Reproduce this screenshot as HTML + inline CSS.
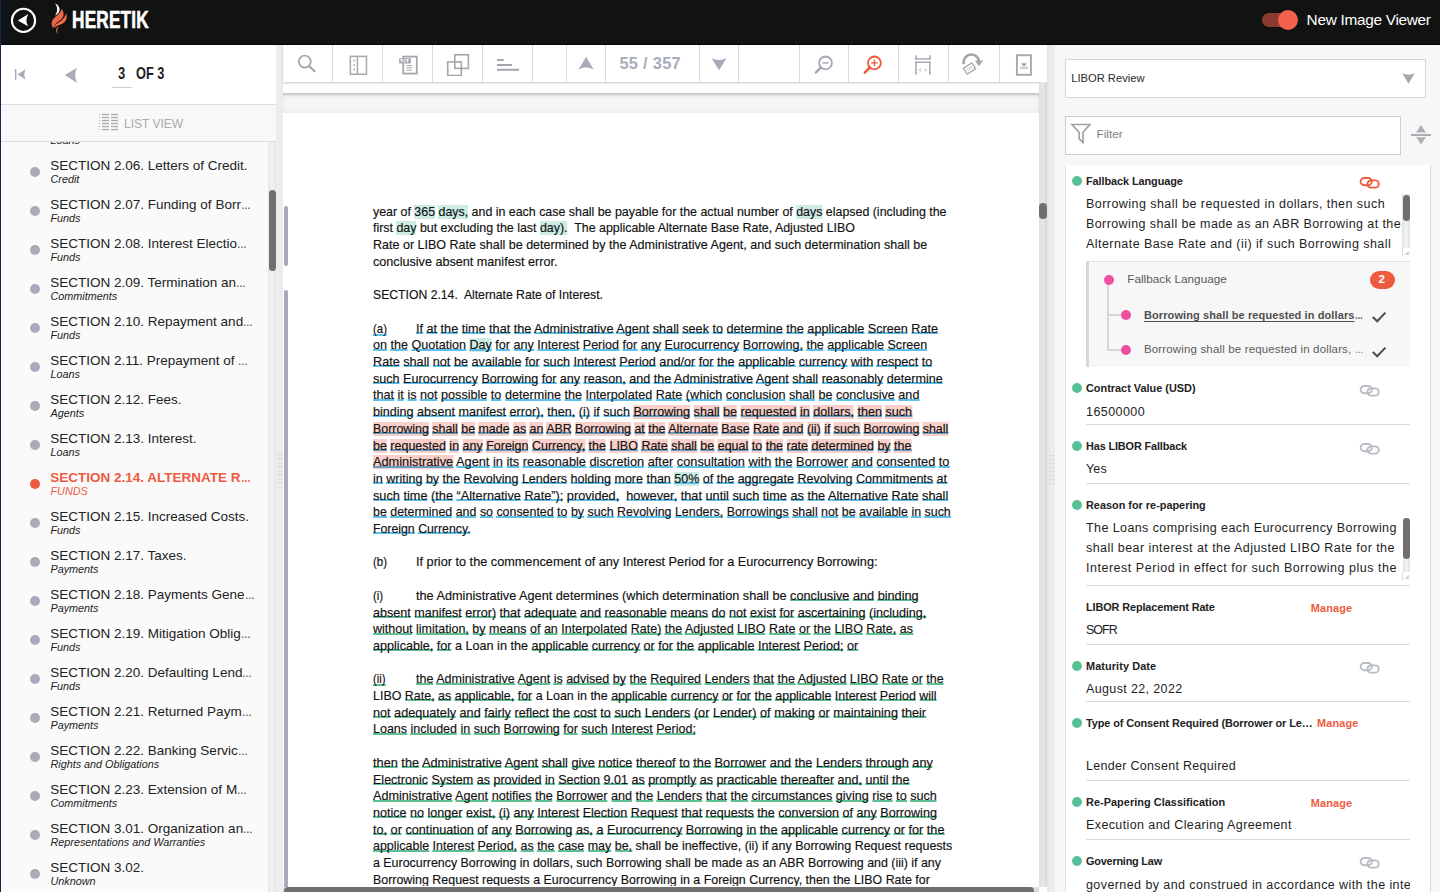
<!DOCTYPE html><html><head><meta charset="utf-8"><style>
*{margin:0;padding:0;box-sizing:border-box}
html,body{width:1440px;height:892px;overflow:hidden;background:#f0f0f0;font-family:"Liberation Sans",sans-serif;}
body{position:relative}
.a{position:absolute}
.t{position:absolute;white-space:nowrap}
.dl{font-size:12.4px;line-height:12.4px;color:#111;transform-origin:0 0;-webkit-text-stroke:0.15px #111;white-space:pre}
</style></head><body><div class="a" style="left:0;top:0;width:1440px;height:45px;background:#111212"></div>
<div class="a" style="left:0;top:44px;width:1440px;height:1px;background:#050505"></div>
<svg class="a" style="left:9px;top:6px" width="30" height="30" viewBox="0 0 30 30"><circle cx="14.5" cy="14.4" r="11.6" fill="none" stroke="#fff" stroke-width="2.1"/><path d="M8.8 14.5 L19.4 8.1 Q15.6 14.5 19 20.3 Z" fill="#fff"/></svg>
<svg class="a" style="left:40px;top:0px" width="40" height="40" viewBox="40 0 40 40"><path d="M55,3.6 C58.6,5 60.2,8 59.3,11.2 C58.6,13.2 57,14.6 55,15.6 C56.8,13.2 57.5,10.2 57,7.8 C56.7,6.2 56.1,4.8 55,3.6 Z" fill="#fff"/><path d="M61.5,8.8 C64.2,12 64.4,16.6 61.2,19.6 C59,21.6 56,22.6 54.6,25.4 L53.4,27.9 C51.2,26 51,22 53.2,19.2 C55.8,15.8 60.8,13.8 61.5,8.8 Z" fill="#ee6447"/><path d="M66.2,13.5 C67.6,17.6 66.2,21.6 62.6,23.6 C60,25.1 56.8,25.6 53.8,28 C54.8,25 57.4,23 60,21.6 C62.6,20.1 64.6,17.6 66.2,13.5 Z" fill="#f06f45"/><path d="M58.8,26 C56.4,27.6 55,30.6 57.6,34.2 C56.9,31.6 57.2,28.6 58.8,26 Z" fill="#f07445"/></svg>
<div class="t" style="left:72.4px;top:8.0px;font-size:24.4px;line-height:24.4px;font-weight:bold;color:#fff;-webkit-text-stroke:0.6px #fff;transform:scaleX(0.705);transform-origin:0 0;letter-spacing:0.3px">HERETIK</div>
<div class="a" style="left:1262px;top:13px;width:30px;height:14px;border-radius:7px;background:#8a3a30"></div>
<div class="a" style="left:1278px;top:10px;width:20px;height:20px;border-radius:50%;background:#f26149"></div>
<div class="t " style="left:1306.60px;top:12.16px;font-size:15.4px;line-height:15.4px;color:#fff;letter-spacing:-0.3px">New Image Viewer</div>
<div class="a" style="left:0;top:0;width:1px;height:892px;background:#13294b"></div>
<div class="a" style="left:1px;top:45px;width:275px;height:847px;background:#fafafa"></div>
<div class="a" style="left:1px;top:45px;width:275px;height:60px;background:#fff;border-bottom:1px solid #dcdcdc"></div>
<div class="a" style="left:1px;top:105px;width:275px;height:37px;background:#f8f8f8;border-bottom:1px solid #dcdcdc"></div>
<svg class="a" style="left:12px;top:66px" width="18" height="18" viewBox="0 0 18 18"><rect x="2.9" y="3" width="1.5" height="10.8" fill="#a9abbb"/><path d="M5.6 8.4 L13.8 3 Q10.9 8.4 13.8 13.8 Z" fill="#a9abbb"/></svg>
<svg class="a" style="left:62px;top:66px" width="18" height="18" viewBox="0 0 18 18"><path d="M2.8 8.9 L15.1 1.8 Q11.2 8.9 15.1 17 Z" fill="#a9abbb"/></svg>
<div class="t" style="left:118.3px;top:64.6px;font-size:16.2px;line-height:16.2px;font-weight:bold;color:#1f1f1f;transform:scaleX(0.8);transform-origin:0 0">3</div>
<div class="a" style="left:112px;top:87px;width:20px;height:1px;background:#cfcfcf"></div>
<div class="t" style="left:136.0px;top:64.6px;font-size:16.2px;line-height:16.2px;font-weight:bold;color:#1f1f1f;transform:scaleX(0.79);transform-origin:0 0">OF 3</div>
<svg class="a" style="left:99px;top:112.8px" width="20" height="18" viewBox="0 0 20 18"><g fill="#a9acb2"><rect x="0" y="1" width="1" height="1"/><rect x="3" y="0.9" width="7" height="1.3"/><rect x="12" y="0.9" width="7" height="1.3"/><rect x="0" y="4" width="1" height="1"/><rect x="3" y="3.9" width="7" height="1.3"/><rect x="12" y="3.9" width="7" height="1.3"/><rect x="0" y="7" width="1" height="1"/><rect x="3" y="6.9" width="7" height="1.3"/><rect x="12" y="6.9" width="7" height="1.3"/><rect x="0" y="10" width="1" height="1"/><rect x="3" y="9.9" width="7" height="1.3"/><rect x="12" y="9.9" width="7" height="1.3"/><rect x="0" y="13" width="1" height="1"/><rect x="3" y="12.9" width="7" height="1.3"/><rect x="12" y="12.9" width="7" height="1.3"/><rect x="0" y="16" width="1" height="1"/><rect x="3" y="15.9" width="7" height="1.3"/><rect x="12" y="15.9" width="7" height="1.3"/></g></svg>
<div class="t " style="left:124.00px;top:117.74px;font-size:12px;line-height:12px;color:#a8abb2">LIST VIEW</div>
<div class="a" style="left:1px;top:142px;width:267px;height:750px;overflow:hidden">
<div class="a" style="left:29px;top:-14.1px;width:10px;height:10px;border-radius:50%;background:#a9abba"></div>
<div class="t " style="left:49.30px;top:-22.43px;font-size:13.5px;line-height:13.5px;color:#222;">SECTION 2.05. <span style="display:inline-block;transform:scaleX(0.72);transform-origin:0 0">…</span></div>
<div class="t " style="left:49.50px;top:-7.24px;font-size:10.8px;line-height:10.8px;color:#222;font-style:italic">Loans</div>
<div class="a" style="left:29px;top:24.9px;width:10px;height:10px;border-radius:50%;background:#a9abba"></div>
<div class="t " style="left:49.30px;top:16.57px;font-size:13.5px;line-height:13.5px;color:#222;">SECTION 2.06. Letters of Credit.</div>
<div class="t " style="left:49.50px;top:31.76px;font-size:10.8px;line-height:10.8px;color:#222;font-style:italic">Credit</div>
<div class="a" style="left:29px;top:63.9px;width:10px;height:10px;border-radius:50%;background:#a9abba"></div>
<div class="t " style="left:49.30px;top:55.57px;font-size:13.5px;line-height:13.5px;color:#222;">SECTION 2.07. Funding of Borr<span style="display:inline-block;transform:scaleX(0.72);transform-origin:0 0">…</span></div>
<div class="t " style="left:49.50px;top:70.76px;font-size:10.8px;line-height:10.8px;color:#222;font-style:italic">Funds</div>
<div class="a" style="left:29px;top:102.9px;width:10px;height:10px;border-radius:50%;background:#a9abba"></div>
<div class="t " style="left:49.30px;top:94.57px;font-size:13.5px;line-height:13.5px;color:#222;">SECTION 2.08. Interest Electio<span style="display:inline-block;transform:scaleX(0.72);transform-origin:0 0">…</span></div>
<div class="t " style="left:49.50px;top:109.76px;font-size:10.8px;line-height:10.8px;color:#222;font-style:italic">Funds</div>
<div class="a" style="left:29px;top:141.9px;width:10px;height:10px;border-radius:50%;background:#a9abba"></div>
<div class="t " style="left:49.30px;top:133.57px;font-size:13.5px;line-height:13.5px;color:#222;">SECTION 2.09. Termination an<span style="display:inline-block;transform:scaleX(0.72);transform-origin:0 0">…</span></div>
<div class="t " style="left:49.50px;top:148.76px;font-size:10.8px;line-height:10.8px;color:#222;font-style:italic">Commitments</div>
<div class="a" style="left:29px;top:180.9px;width:10px;height:10px;border-radius:50%;background:#a9abba"></div>
<div class="t " style="left:49.30px;top:172.57px;font-size:13.5px;line-height:13.5px;color:#222;">SECTION 2.10. Repayment and<span style="display:inline-block;transform:scaleX(0.72);transform-origin:0 0">…</span></div>
<div class="t " style="left:49.50px;top:187.76px;font-size:10.8px;line-height:10.8px;color:#222;font-style:italic">Funds</div>
<div class="a" style="left:29px;top:219.9px;width:10px;height:10px;border-radius:50%;background:#a9abba"></div>
<div class="t " style="left:49.30px;top:211.57px;font-size:13.5px;line-height:13.5px;color:#222;">SECTION 2.11. Prepayment of <span style="display:inline-block;transform:scaleX(0.72);transform-origin:0 0">…</span></div>
<div class="t " style="left:49.50px;top:226.76px;font-size:10.8px;line-height:10.8px;color:#222;font-style:italic">Loans</div>
<div class="a" style="left:29px;top:258.9px;width:10px;height:10px;border-radius:50%;background:#a9abba"></div>
<div class="t " style="left:49.30px;top:250.57px;font-size:13.5px;line-height:13.5px;color:#222;">SECTION 2.12. Fees.</div>
<div class="t " style="left:49.50px;top:265.76px;font-size:10.8px;line-height:10.8px;color:#222;font-style:italic">Agents</div>
<div class="a" style="left:29px;top:297.9px;width:10px;height:10px;border-radius:50%;background:#a9abba"></div>
<div class="t " style="left:49.30px;top:289.57px;font-size:13.5px;line-height:13.5px;color:#222;">SECTION 2.13. Interest.</div>
<div class="t " style="left:49.50px;top:304.76px;font-size:10.8px;line-height:10.8px;color:#222;font-style:italic">Loans</div>
<div class="a" style="left:29px;top:336.9px;width:10px;height:10px;border-radius:50%;background:#ee5a3f"></div>
<div class="t " style="left:49.30px;top:328.57px;font-size:13.5px;line-height:13.5px;color:#ee5a3f;font-weight:bold;">SECTION 2.14. ALTERNATE R<span style="display:inline-block;transform:scaleX(0.72);transform-origin:0 0">…</span></div>
<div class="t " style="left:49.50px;top:343.76px;font-size:10.8px;line-height:10.8px;color:#ee5a3f;font-style:italic">FUNDS</div>
<div class="a" style="left:29px;top:375.9px;width:10px;height:10px;border-radius:50%;background:#a9abba"></div>
<div class="t " style="left:49.30px;top:367.57px;font-size:13.5px;line-height:13.5px;color:#222;">SECTION 2.15. Increased Costs.</div>
<div class="t " style="left:49.50px;top:382.76px;font-size:10.8px;line-height:10.8px;color:#222;font-style:italic">Funds</div>
<div class="a" style="left:29px;top:414.9px;width:10px;height:10px;border-radius:50%;background:#a9abba"></div>
<div class="t " style="left:49.30px;top:406.57px;font-size:13.5px;line-height:13.5px;color:#222;">SECTION 2.17. Taxes.</div>
<div class="t " style="left:49.50px;top:421.76px;font-size:10.8px;line-height:10.8px;color:#222;font-style:italic">Payments</div>
<div class="a" style="left:29px;top:453.9px;width:10px;height:10px;border-radius:50%;background:#a9abba"></div>
<div class="t " style="left:49.30px;top:445.57px;font-size:13.5px;line-height:13.5px;color:#222;">SECTION 2.18. Payments Gene<span style="display:inline-block;transform:scaleX(0.72);transform-origin:0 0">…</span></div>
<div class="t " style="left:49.50px;top:460.76px;font-size:10.8px;line-height:10.8px;color:#222;font-style:italic">Payments</div>
<div class="a" style="left:29px;top:492.9px;width:10px;height:10px;border-radius:50%;background:#a9abba"></div>
<div class="t " style="left:49.30px;top:484.57px;font-size:13.5px;line-height:13.5px;color:#222;">SECTION 2.19. Mitigation Oblig<span style="display:inline-block;transform:scaleX(0.72);transform-origin:0 0">…</span></div>
<div class="t " style="left:49.50px;top:499.76px;font-size:10.8px;line-height:10.8px;color:#222;font-style:italic">Funds</div>
<div class="a" style="left:29px;top:531.9px;width:10px;height:10px;border-radius:50%;background:#a9abba"></div>
<div class="t " style="left:49.30px;top:523.57px;font-size:13.5px;line-height:13.5px;color:#222;">SECTION 2.20. Defaulting Lend<span style="display:inline-block;transform:scaleX(0.72);transform-origin:0 0">…</span></div>
<div class="t " style="left:49.50px;top:538.76px;font-size:10.8px;line-height:10.8px;color:#222;font-style:italic">Funds</div>
<div class="a" style="left:29px;top:570.9px;width:10px;height:10px;border-radius:50%;background:#a9abba"></div>
<div class="t " style="left:49.30px;top:562.57px;font-size:13.5px;line-height:13.5px;color:#222;">SECTION 2.21. Returned Paym<span style="display:inline-block;transform:scaleX(0.72);transform-origin:0 0">…</span></div>
<div class="t " style="left:49.50px;top:577.76px;font-size:10.8px;line-height:10.8px;color:#222;font-style:italic">Payments</div>
<div class="a" style="left:29px;top:609.9px;width:10px;height:10px;border-radius:50%;background:#a9abba"></div>
<div class="t " style="left:49.30px;top:601.57px;font-size:13.5px;line-height:13.5px;color:#222;">SECTION 2.22. Banking Servic<span style="display:inline-block;transform:scaleX(0.72);transform-origin:0 0">…</span></div>
<div class="t " style="left:49.50px;top:616.76px;font-size:10.8px;line-height:10.8px;color:#222;font-style:italic">Rights and Obligations</div>
<div class="a" style="left:29px;top:648.9px;width:10px;height:10px;border-radius:50%;background:#a9abba"></div>
<div class="t " style="left:49.30px;top:640.57px;font-size:13.5px;line-height:13.5px;color:#222;">SECTION 2.23. Extension of M<span style="display:inline-block;transform:scaleX(0.72);transform-origin:0 0">…</span></div>
<div class="t " style="left:49.50px;top:655.76px;font-size:10.8px;line-height:10.8px;color:#222;font-style:italic">Commitments</div>
<div class="a" style="left:29px;top:687.9px;width:10px;height:10px;border-radius:50%;background:#a9abba"></div>
<div class="t " style="left:49.30px;top:679.57px;font-size:13.5px;line-height:13.5px;color:#222;">SECTION 3.01. Organization an<span style="display:inline-block;transform:scaleX(0.72);transform-origin:0 0">…</span></div>
<div class="t " style="left:49.50px;top:694.76px;font-size:10.8px;line-height:10.8px;color:#222;font-style:italic">Representations and Warranties</div>
<div class="a" style="left:29px;top:726.9px;width:10px;height:10px;border-radius:50%;background:#a9abba"></div>
<div class="t " style="left:49.30px;top:718.57px;font-size:13.5px;line-height:13.5px;color:#222;">SECTION 3.02.</div>
<div class="t " style="left:49.50px;top:733.76px;font-size:10.8px;line-height:10.8px;color:#222;font-style:italic">Unknown</div>
</div>
<div class="a" style="left:268px;top:142px;width:8px;height:750px;background:linear-gradient(90deg,#e6e6e6,#f2f2f2 50%,#e6e6e6)"></div>
<div class="a" style="left:268.5px;top:189.5px;width:7.5px;height:81px;border-radius:4px;background:#6f6f6f"></div>
<div class="a" style="left:276px;top:45px;width:7px;height:847px;background:#ececec"></div>
<svg class="a" style="left:278px;top:454px" width="5" height="32"><g fill="#c8c8c8"><rect x="0" y="0" width="1.3" height="1.3"/><rect x="3" y="0" width="1.3" height="1.3"/><rect x="0" y="4" width="1.3" height="1.3"/><rect x="3" y="4" width="1.3" height="1.3"/><rect x="0" y="8" width="1.3" height="1.3"/><rect x="3" y="8" width="1.3" height="1.3"/><rect x="0" y="12" width="1.3" height="1.3"/><rect x="3" y="12" width="1.3" height="1.3"/><rect x="0" y="16" width="1.3" height="1.3"/><rect x="3" y="16" width="1.3" height="1.3"/><rect x="0" y="20" width="1.3" height="1.3"/><rect x="3" y="20" width="1.3" height="1.3"/><rect x="0" y="24" width="1.3" height="1.3"/><rect x="3" y="24" width="1.3" height="1.3"/><rect x="0" y="28" width="1.3" height="1.3"/><rect x="3" y="28" width="1.3" height="1.3"/></g></svg>
<div class="a" style="left:283px;top:45px;width:765px;height:847px;background:#f3f3f3"></div>
<div class="a" style="left:283px;top:82px;width:755.5px;height:11px;background:#fff"></div>
<div class="a" style="left:283px;top:93px;width:755.5px;height:20px;background:linear-gradient(#f4f4f4,#f6f6f6 70%,#efefef);box-shadow:inset 0 3px 3px -1px rgba(0,0,0,0.22)"></div>
<div class="a" style="left:283px;top:113px;width:755.5px;height:779px;background:#fff"></div>
<div class="a" style="left:284px;top:205.5px;width:3.8px;height:60.5px;border-radius:2px;background:#a8a9b9"></div>
<div class="a" style="left:284px;top:290px;width:3.8px;height:602px;border-radius:2px;background:#a8a9b9"></div>
<div class="a" style="left:283px;top:45px;width:765px;height:37px;background:#fff;box-shadow:0 1px 2px rgba(0,0,0,0.22)"></div>
<div class="a" style="left:331.9px;top:45px;width:1px;height:37px;background:#dadada"></div>
<div class="a" style="left:381.9px;top:45px;width:1px;height:37px;background:#dadada"></div>
<div class="a" style="left:431.9px;top:45px;width:1px;height:37px;background:#dadada"></div>
<div class="a" style="left:481.9px;top:45px;width:1px;height:37px;background:#dadada"></div>
<div class="a" style="left:531.9px;top:45px;width:1px;height:37px;background:#dadada"></div>
<div class="a" style="left:566.3px;top:45px;width:1px;height:37px;background:#dadada"></div>
<div class="a" style="left:605.2px;top:45px;width:1px;height:37px;background:#dadada"></div>
<div class="a" style="left:698.9px;top:45px;width:1px;height:37px;background:#dadada"></div>
<div class="a" style="left:737.9px;top:45px;width:1px;height:37px;background:#dadada"></div>
<div class="a" style="left:799.1px;top:45px;width:1px;height:37px;background:#dadada"></div>
<div class="a" style="left:848.1px;top:45px;width:1px;height:37px;background:#dadada"></div>
<div class="a" style="left:898.1px;top:45px;width:1px;height:37px;background:#dadada"></div>
<div class="a" style="left:948.0px;top:45px;width:1px;height:37px;background:#dadada"></div>
<div class="a" style="left:998.5px;top:45px;width:1px;height:37px;background:#dadada"></div>
<svg class="a" style="left:294px;top:50px" width="26" height="26" viewBox="0 0 26 26"><circle cx="10.8" cy="11.6" r="6" fill="none" stroke="#a4a8ae" stroke-width="1.8"/><path d="M15.3 16.2 L20.5 21.3" stroke="#a4a8ae" stroke-width="2.2" stroke-linecap="round"/></svg>
<svg class="a" style="left:344px;top:50px" width="26" height="26" viewBox="0 0 26 26"><rect x="6.35" y="6.35" width="16.1" height="17.9" fill="none" stroke="#a4a8ae" stroke-width="1.5"/><path d="M13.4 6 V24.5" stroke="#a4a8ae" stroke-width="1.5"/><g fill="#a4a8ae"><rect x="9.3" y="9.8" width="1.6" height="1.6"/><rect x="9.3" y="14.3" width="1.6" height="1.6"/><rect x="9.3" y="18.7" width="1.6" height="1.6"/></g></svg>
<svg class="a" style="left:394px;top:50px" width="26" height="26" viewBox="0 0 26 26"><rect x="9.2" y="6.6" width="13.6" height="17.0" fill="none" stroke="#a4a8ae" stroke-width="1.8"/><rect x="5.1" y="8.3" width="11.8" height="5.2" fill="#a4a8ae" rx="0.5"/><g fill="#fff"><rect x="6.3" y="9.4" width="2.6" height="0.9"/><rect x="7.2" y="9.4" width="0.9" height="3"/><rect x="12.2" y="9.4" width="2.6" height="0.9"/><rect x="13.1" y="9.4" width="0.9" height="3"/><path d="M9.4 9.4 L11.5 12.5 M11.5 9.4 L9.4 12.5" stroke="#fff" stroke-width="0.8"/></g><g fill="#a4a8ae"><rect x="12.5" y="15" width="5.5" height="1"/><rect x="12.5" y="17.3" width="5.5" height="1"/><rect x="12.5" y="19.6" width="5.5" height="1"/></g></svg>
<svg class="a" style="left:444px;top:50px" width="26" height="26" viewBox="0 0 26 26"><rect x="10.8" y="4.8" width="13.6" height="13.6" fill="none" stroke="#a4a8ae" stroke-width="1.6"/><rect x="3.7" y="11.9" width="13.6" height="13.6" fill="none" stroke="#a4a8ae" stroke-width="1.6"/></svg>
<svg class="a" style="left:494px;top:50px" width="26" height="26" viewBox="0 0 26 26"><g fill="#a4a8ae"><rect x="3" y="9" width="6.8" height="2"/><rect x="3" y="14" width="15" height="2"/><rect x="3" y="18.75" width="22" height="2"/></g></svg>
<svg class="a" style="left:576px;top:50px" width="20" height="22" viewBox="0 0 20 22"><path d="M10.2 6.8 L17.8 19.8 Q10.2 14.6 2.4 19.8 Z" fill="#a9abbb"/></svg>
<div class="t " style="left:619.40px;top:55.22px;font-size:16.4px;line-height:16.4px;color:#a9abbb;font-weight:bold;letter-spacing:0.3px">55 / 357</div>
<svg class="a" style="left:709px;top:50px" width="20" height="22" viewBox="0 0 20 22"><path d="M2.6 8.3 Q10 11.5 17.5 8.3 L10 20.2 Z" fill="#a9abbb"/></svg>
<svg class="a" style="left:810px;top:50px" width="26" height="26" viewBox="0 0 26 26"><circle cx="15.5" cy="12.9" r="6.4" fill="none" stroke="#a4a8ae" stroke-width="1.8"/><path d="M11 17.4 L5.8 22.6" stroke="#a4a8ae" stroke-width="2.4" stroke-linecap="round"/><path d="M12.3 12.9 H18.7" stroke="#a4a8ae" stroke-width="1.4"/></svg>
<svg class="a" style="left:859px;top:50px" width="26" height="26" viewBox="0 0 26 26"><circle cx="15.4" cy="12.9" r="6.4" fill="none" stroke="#ef5638" stroke-width="1.8"/><path d="M10.9 17.4 L5.8 22.6" stroke="#ef5638" stroke-width="2.4" stroke-linecap="round"/><path d="M12.2 12.9 H18.6 M15.4 9.7 V16.1" stroke="#ef5638" stroke-width="1.4"/></svg>
<svg class="a" style="left:910px;top:50px" width="26" height="26" viewBox="0 0 26 26"><g fill="#a4a8ae"><rect x="5.2" y="5.2" width="1.5" height="4.3"/><rect x="19.1" y="5.2" width="1.5" height="4.3"/><rect x="5.2" y="8.2" width="15.4" height="1.4"/><rect x="5.2" y="11.6" width="15.4" height="1.4"/><rect x="5.2" y="11.6" width="1.5" height="13"/><rect x="19.1" y="11.6" width="1.5" height="13"/></g><path d="M10.8 18.8 L9.3 20 L10.8 21.2 M15 18.8 L16.5 20 L15 21.2" stroke="#a4a8ae" stroke-width="0.9" fill="none"/></svg>
<svg class="a" style="left:960px;top:50px" width="26" height="26" viewBox="0 0 26 26"><path d="M3.6 14.2 C3 8.5 7 4.5 11.5 4.5 C15.5 4.5 18.5 7.5 19 11" fill="none" stroke="#a4a8ae" stroke-width="2.6"/><path d="M15 10.5 L23.2 10.5 L18.8 16.2 Z" fill="#a4a8ae"/><g transform="rotate(-33 9.5 18.5)"><rect x="4.5" y="15" width="10" height="7" fill="#fff" stroke="#a4a8ae" stroke-width="1.3"/><path d="M7.5 17 V20 M9.5 17 V20 M11.5 17 V20" stroke="#a4a8ae" stroke-width="0.7"/></g></svg>
<svg class="a" style="left:1010px;top:50px" width="26" height="26" viewBox="0 0 26 26"><rect x="6.9" y="5.2" width="14" height="19.6" fill="none" stroke="#a4a8ae" stroke-width="1.9"/><path d="M11 13.3 L16.9 13.3 L13.95 17.2 Z" fill="#a4a8ae"/><path d="M11 16.6 V18.3 H16.9 V16.6" fill="none" stroke="#a4a8ae" stroke-width="1.1"/></svg>
<div class="a" style="left:1039px;top:82px;width:8.2px;height:804.7px;background:linear-gradient(90deg,#dedede,#e8e8e8 50%,#d6d6d6)"></div>
<div class="a" style="left:1039px;top:886.7px;width:8.2px;height:6px;background:#fff"></div>
<div class="a" style="left:1047.2px;top:45px;width:1.5px;height:847px;background:#e6e6e6"></div>
<div class="a" style="left:1039.4px;top:203px;width:7.4px;height:16px;border-radius:4px;background:#6f6f6f"></div>
<div class="a" style="left:283px;top:886.7px;width:756px;height:6px;background:linear-gradient(#e0e0e0,#d8d8d8)"></div>
<div class="a" style="left:284px;top:886.8px;width:749.8px;height:8px;border-radius:4px;background:#6f6f6f"></div>
<div class="a" style="left:1048.5px;top:45px;width:6.8px;height:847px;background:#ececec"></div>
<svg class="a" style="left:1050px;top:455px" width="5" height="32"><g fill="#c8c8c8"><rect x="0" y="0" width="1.3" height="1.3"/><rect x="3" y="0" width="1.3" height="1.3"/><rect x="0" y="4" width="1.3" height="1.3"/><rect x="3" y="4" width="1.3" height="1.3"/><rect x="0" y="8" width="1.3" height="1.3"/><rect x="3" y="8" width="1.3" height="1.3"/><rect x="0" y="12" width="1.3" height="1.3"/><rect x="3" y="12" width="1.3" height="1.3"/><rect x="0" y="16" width="1.3" height="1.3"/><rect x="3" y="16" width="1.3" height="1.3"/><rect x="0" y="20" width="1.3" height="1.3"/><rect x="3" y="20" width="1.3" height="1.3"/><rect x="0" y="24" width="1.3" height="1.3"/><rect x="3" y="24" width="1.3" height="1.3"/><rect x="0" y="28" width="1.3" height="1.3"/><rect x="3" y="28" width="1.3" height="1.3"/></g></svg>
<div class="a" style="left:288px;top:113px;width:750px;height:773px;overflow:hidden">
<div class="t dl" style="left:84.60px;top:92.70px;transform:scaleX(1.0006)">year of <span style="background:#cdebe5;">365</span> <span style="background:#cdebe5;">days,</span> and in each case shall be payable for the actual number of <span style="background:#cdebe5;">days</span> elapsed (including the</div>
<div class="t dl" style="left:84.60px;top:109.40px;transform:scaleX(1.0015)">first <span style="background:#cdebe5;">day</span> but excluding the last <span style="background:#cdebe5;">day).</span>  The applicable Alternate Base Rate, Adjusted LIBO</div>
<div class="t dl" style="left:84.60px;top:126.10px;transform:scaleX(1.0107)">Rate or LIBO Rate shall be determined by the Administrative Agent, and such determination shall be</div>
<div class="t dl" style="left:84.60px;top:142.80px;transform:scaleX(1.0185)">conclusive absent manifest error.</div>
<div class="t dl" style="left:84.60px;top:176.20px;transform:scaleX(0.9849)">SECTION 2.14.  Alternate Rate of Interest.</div>
<div class="t dl" style="left:128.00px;top:209.60px;transform:scaleX(1.0195)"><span style="background:linear-gradient(#5cc0ea,#5cc0ea) 0 calc(100% - 1.6px)/100% 2px no-repeat;">If</span> <span style="background:linear-gradient(#5cc0ea,#5cc0ea) 0 calc(100% - 1.6px)/100% 2px no-repeat;">at</span> <span style="background:linear-gradient(#5cc0ea,#5cc0ea) 0 calc(100% - 1.6px)/100% 2px no-repeat;">the</span> <span style="background:linear-gradient(#5cc0ea,#5cc0ea) 0 calc(100% - 1.6px)/100% 2px no-repeat;">time</span> <span style="background:linear-gradient(#5cc0ea,#5cc0ea) 0 calc(100% - 1.6px)/100% 2px no-repeat;">that</span> <span style="background:linear-gradient(#5cc0ea,#5cc0ea) 0 calc(100% - 1.6px)/100% 2px no-repeat;">the</span> <span style="background:linear-gradient(#5cc0ea,#5cc0ea) 0 calc(100% - 1.6px)/100% 2px no-repeat;">Administrative</span> <span style="background:linear-gradient(#5cc0ea,#5cc0ea) 0 calc(100% - 1.6px)/100% 2px no-repeat;">Agent</span> <span style="background:linear-gradient(#5cc0ea,#5cc0ea) 0 calc(100% - 1.6px)/100% 2px no-repeat;">shall</span> <span style="background:linear-gradient(#5cc0ea,#5cc0ea) 0 calc(100% - 1.6px)/100% 2px no-repeat;">seek</span> <span style="background:linear-gradient(#5cc0ea,#5cc0ea) 0 calc(100% - 1.6px)/100% 2px no-repeat;">to</span> <span style="background:linear-gradient(#5cc0ea,#5cc0ea) 0 calc(100% - 1.6px)/100% 2px no-repeat;">determine</span> <span style="background:linear-gradient(#5cc0ea,#5cc0ea) 0 calc(100% - 1.6px)/100% 2px no-repeat;">the</span> <span style="background:linear-gradient(#5cc0ea,#5cc0ea) 0 calc(100% - 1.6px)/100% 2px no-repeat;">applicable</span> <span style="background:linear-gradient(#5cc0ea,#5cc0ea) 0 calc(100% - 1.6px)/100% 2px no-repeat;">Screen</span> <span style="background:linear-gradient(#5cc0ea,#5cc0ea) 0 calc(100% - 1.6px)/100% 2px no-repeat;">Rate</span></div>
<div class="t dl" style="left:84.60px;top:209.60px;transform:scaleX(0.92)"><span style="background:linear-gradient(#5cc0ea,#5cc0ea) 0 100%/100% 2px no-repeat;">(a)</span></div>
<div class="t dl" style="left:84.60px;top:226.30px;transform:scaleX(1.0144)"><span style="background:linear-gradient(#5cc0ea,#5cc0ea) 0 calc(100% - 1.6px)/100% 2px no-repeat;">on</span> <span style="background:linear-gradient(#5cc0ea,#5cc0ea) 0 calc(100% - 1.6px)/100% 2px no-repeat;">the</span> <span style="background:linear-gradient(#5cc0ea,#5cc0ea) 0 calc(100% - 1.6px)/100% 2px no-repeat;">Quotation</span> <span style="background:linear-gradient(#5cc0ea,#5cc0ea) 0 calc(100% - 1.6px)/100% 2px no-repeat,#cdebe5;">Day</span> <span style="background:linear-gradient(#5cc0ea,#5cc0ea) 0 calc(100% - 1.6px)/100% 2px no-repeat;">for</span> <span style="background:linear-gradient(#5cc0ea,#5cc0ea) 0 calc(100% - 1.6px)/100% 2px no-repeat;">any</span> <span style="background:linear-gradient(#5cc0ea,#5cc0ea) 0 calc(100% - 1.6px)/100% 2px no-repeat;">Interest</span> <span style="background:linear-gradient(#5cc0ea,#5cc0ea) 0 calc(100% - 1.6px)/100% 2px no-repeat;">Period</span> <span style="background:linear-gradient(#5cc0ea,#5cc0ea) 0 calc(100% - 1.6px)/100% 2px no-repeat;">for</span> <span style="background:linear-gradient(#5cc0ea,#5cc0ea) 0 calc(100% - 1.6px)/100% 2px no-repeat;">any</span> <span style="background:linear-gradient(#5cc0ea,#5cc0ea) 0 calc(100% - 1.6px)/100% 2px no-repeat;">Eurocurrency</span> <span style="background:linear-gradient(#5cc0ea,#5cc0ea) 0 calc(100% - 1.6px)/100% 2px no-repeat;">Borrowing,</span> <span style="background:linear-gradient(#5cc0ea,#5cc0ea) 0 calc(100% - 1.6px)/100% 2px no-repeat;">the</span> <span style="background:linear-gradient(#5cc0ea,#5cc0ea) 0 calc(100% - 1.6px)/100% 2px no-repeat;">applicable</span> <span style="background:linear-gradient(#5cc0ea,#5cc0ea) 0 calc(100% - 1.6px)/100% 2px no-repeat;">Screen</span></div>
<div class="t dl" style="left:84.60px;top:243.00px;transform:scaleX(1.0208)"><span style="background:linear-gradient(#5cc0ea,#5cc0ea) 0 calc(100% - 1.6px)/100% 2px no-repeat;">Rate</span> <span style="background:linear-gradient(#5cc0ea,#5cc0ea) 0 calc(100% - 1.6px)/100% 2px no-repeat;">shall</span> <span style="background:linear-gradient(#5cc0ea,#5cc0ea) 0 calc(100% - 1.6px)/100% 2px no-repeat;">not</span> <span style="background:linear-gradient(#5cc0ea,#5cc0ea) 0 calc(100% - 1.6px)/100% 2px no-repeat;">be</span> <span style="background:linear-gradient(#5cc0ea,#5cc0ea) 0 calc(100% - 1.6px)/100% 2px no-repeat;">available</span> <span style="background:linear-gradient(#5cc0ea,#5cc0ea) 0 calc(100% - 1.6px)/100% 2px no-repeat;">for</span> <span style="background:linear-gradient(#5cc0ea,#5cc0ea) 0 calc(100% - 1.6px)/100% 2px no-repeat;">such</span> <span style="background:linear-gradient(#5cc0ea,#5cc0ea) 0 calc(100% - 1.6px)/100% 2px no-repeat;">Interest</span> <span style="background:linear-gradient(#5cc0ea,#5cc0ea) 0 calc(100% - 1.6px)/100% 2px no-repeat;">Period</span> <span style="background:linear-gradient(#5cc0ea,#5cc0ea) 0 calc(100% - 1.6px)/100% 2px no-repeat;">and/or</span> <span style="background:linear-gradient(#5cc0ea,#5cc0ea) 0 calc(100% - 1.6px)/100% 2px no-repeat;">for</span> <span style="background:linear-gradient(#5cc0ea,#5cc0ea) 0 calc(100% - 1.6px)/100% 2px no-repeat;">the</span> <span style="background:linear-gradient(#5cc0ea,#5cc0ea) 0 calc(100% - 1.6px)/100% 2px no-repeat;">applicable</span> <span style="background:linear-gradient(#5cc0ea,#5cc0ea) 0 calc(100% - 1.6px)/100% 2px no-repeat;">currency</span> <span style="background:linear-gradient(#5cc0ea,#5cc0ea) 0 calc(100% - 1.6px)/100% 2px no-repeat;">with</span> <span style="background:linear-gradient(#5cc0ea,#5cc0ea) 0 calc(100% - 1.6px)/100% 2px no-repeat;">respect</span> <span style="background:linear-gradient(#5cc0ea,#5cc0ea) 0 calc(100% - 1.6px)/100% 2px no-repeat;">to</span></div>
<div class="t dl" style="left:84.60px;top:259.70px;transform:scaleX(1.0158)"><span style="background:linear-gradient(#5cc0ea,#5cc0ea) 0 calc(100% - 1.6px)/100% 2px no-repeat;">such</span> <span style="background:linear-gradient(#5cc0ea,#5cc0ea) 0 calc(100% - 1.6px)/100% 2px no-repeat;">Eurocurrency</span> <span style="background:linear-gradient(#5cc0ea,#5cc0ea) 0 calc(100% - 1.6px)/100% 2px no-repeat;">Borrowing</span> <span style="background:linear-gradient(#5cc0ea,#5cc0ea) 0 calc(100% - 1.6px)/100% 2px no-repeat;">for</span> <span style="background:linear-gradient(#5cc0ea,#5cc0ea) 0 calc(100% - 1.6px)/100% 2px no-repeat;">any</span> <span style="background:linear-gradient(#5cc0ea,#5cc0ea) 0 calc(100% - 1.6px)/100% 2px no-repeat;">reason,</span> <span style="background:linear-gradient(#5cc0ea,#5cc0ea) 0 calc(100% - 1.6px)/100% 2px no-repeat;">and</span> <span style="background:linear-gradient(#5cc0ea,#5cc0ea) 0 calc(100% - 1.6px)/100% 2px no-repeat;">the</span> <span style="background:linear-gradient(#5cc0ea,#5cc0ea) 0 calc(100% - 1.6px)/100% 2px no-repeat;">Administrative</span> <span style="background:linear-gradient(#5cc0ea,#5cc0ea) 0 calc(100% - 1.6px)/100% 2px no-repeat;">Agent</span> <span style="background:linear-gradient(#5cc0ea,#5cc0ea) 0 calc(100% - 1.6px)/100% 2px no-repeat;">shall</span> <span style="background:linear-gradient(#5cc0ea,#5cc0ea) 0 calc(100% - 1.6px)/100% 2px no-repeat;">reasonably</span> <span style="background:linear-gradient(#5cc0ea,#5cc0ea) 0 calc(100% - 1.6px)/100% 2px no-repeat;">determine</span></div>
<div class="t dl" style="left:84.60px;top:276.40px;transform:scaleX(1.0178)"><span style="background:linear-gradient(#5cc0ea,#5cc0ea) 0 calc(100% - 1.6px)/100% 2px no-repeat;">that</span> <span style="background:linear-gradient(#5cc0ea,#5cc0ea) 0 calc(100% - 1.6px)/100% 2px no-repeat;">it</span> <span style="background:linear-gradient(#5cc0ea,#5cc0ea) 0 calc(100% - 1.6px)/100% 2px no-repeat;">is</span> <span style="background:linear-gradient(#5cc0ea,#5cc0ea) 0 calc(100% - 1.6px)/100% 2px no-repeat;">not</span> <span style="background:linear-gradient(#5cc0ea,#5cc0ea) 0 calc(100% - 1.6px)/100% 2px no-repeat;">possible</span> <span style="background:linear-gradient(#5cc0ea,#5cc0ea) 0 calc(100% - 1.6px)/100% 2px no-repeat;">to</span> <span style="background:linear-gradient(#5cc0ea,#5cc0ea) 0 calc(100% - 1.6px)/100% 2px no-repeat;">determine</span> <span style="background:linear-gradient(#5cc0ea,#5cc0ea) 0 calc(100% - 1.6px)/100% 2px no-repeat;">the</span> <span style="background:linear-gradient(#5cc0ea,#5cc0ea) 0 calc(100% - 1.6px)/100% 2px no-repeat;">Interpolated</span> <span style="background:linear-gradient(#5cc0ea,#5cc0ea) 0 calc(100% - 1.6px)/100% 2px no-repeat;">Rate</span> <span style="background:linear-gradient(#5cc0ea,#5cc0ea) 0 calc(100% - 1.6px)/100% 2px no-repeat;">(which</span> <span style="background:linear-gradient(#5cc0ea,#5cc0ea) 0 calc(100% - 1.6px)/100% 2px no-repeat;">conclusion</span> <span style="background:linear-gradient(#5cc0ea,#5cc0ea) 0 calc(100% - 1.6px)/100% 2px no-repeat;">shall</span> <span style="background:linear-gradient(#5cc0ea,#5cc0ea) 0 calc(100% - 1.6px)/100% 2px no-repeat;">be</span> <span style="background:linear-gradient(#5cc0ea,#5cc0ea) 0 calc(100% - 1.6px)/100% 2px no-repeat;">conclusive</span> <span style="background:linear-gradient(#5cc0ea,#5cc0ea) 0 calc(100% - 1.6px)/100% 2px no-repeat;">and</span></div>
<div class="t dl" style="left:84.60px;top:293.10px;transform:scaleX(1.0159)"><span style="background:linear-gradient(#5cc0ea,#5cc0ea) 0 calc(100% - 1.6px)/100% 2px no-repeat;">binding</span> <span style="background:linear-gradient(#5cc0ea,#5cc0ea) 0 calc(100% - 1.6px)/100% 2px no-repeat;">absent</span> <span style="background:linear-gradient(#5cc0ea,#5cc0ea) 0 calc(100% - 1.6px)/100% 2px no-repeat;">manifest</span> <span style="background:linear-gradient(#5cc0ea,#5cc0ea) 0 calc(100% - 1.6px)/100% 2px no-repeat;">error),</span> <span style="background:linear-gradient(#5cc0ea,#5cc0ea) 0 calc(100% - 1.6px)/100% 2px no-repeat;">then,</span> <span style="background:linear-gradient(#5cc0ea,#5cc0ea) 0 calc(100% - 1.6px)/100% 2px no-repeat;">(i)</span> <span style="background:linear-gradient(#5cc0ea,#5cc0ea) 0 calc(100% - 1.6px)/100% 2px no-repeat;">if</span> <span style="background:linear-gradient(#5cc0ea,#5cc0ea) 0 calc(100% - 1.6px)/100% 2px no-repeat;">such</span> <span style="background:linear-gradient(#6a9cc0,#6a9cc0) 0 calc(100% - 1.6px)/100% 2px no-repeat,#f9cfca;">Borrowing</span> <span style="background:linear-gradient(#6a9cc0,#6a9cc0) 0 calc(100% - 1.6px)/100% 2px no-repeat,#f9cfca;">shall</span> <span style="background:linear-gradient(#6a9cc0,#6a9cc0) 0 calc(100% - 1.6px)/100% 2px no-repeat,#f9cfca;">be</span> <span style="background:linear-gradient(#6a9cc0,#6a9cc0) 0 calc(100% - 1.6px)/100% 2px no-repeat,#f9cfca;">requested</span> <span style="background:linear-gradient(#6a9cc0,#6a9cc0) 0 calc(100% - 1.6px)/100% 2px no-repeat,#f9cfca;">in</span> <span style="background:linear-gradient(#6a9cc0,#6a9cc0) 0 calc(100% - 1.6px)/100% 2px no-repeat,#f9cfca;">dollars,</span> <span style="background:linear-gradient(#6a9cc0,#6a9cc0) 0 calc(100% - 1.6px)/100% 2px no-repeat,#f9cfca;">then</span> <span style="background:linear-gradient(#6a9cc0,#6a9cc0) 0 calc(100% - 1.6px)/100% 2px no-repeat,#f9cfca;">such</span></div>
<div class="t dl" style="left:84.60px;top:309.80px;transform:scaleX(1.0009)"><span style="background:linear-gradient(#6a9cc0,#6a9cc0) 0 calc(100% - 1.6px)/100% 2px no-repeat,#f9cfca;">Borrowing</span> <span style="background:linear-gradient(#6a9cc0,#6a9cc0) 0 calc(100% - 1.6px)/100% 2px no-repeat,#f9cfca;">shall</span> <span style="background:linear-gradient(#6a9cc0,#6a9cc0) 0 calc(100% - 1.6px)/100% 2px no-repeat,#f9cfca;">be</span> <span style="background:linear-gradient(#6a9cc0,#6a9cc0) 0 calc(100% - 1.6px)/100% 2px no-repeat,#f9cfca;">made</span> <span style="background:linear-gradient(#6a9cc0,#6a9cc0) 0 calc(100% - 1.6px)/100% 2px no-repeat,#f9cfca;">as</span> <span style="background:linear-gradient(#6a9cc0,#6a9cc0) 0 calc(100% - 1.6px)/100% 2px no-repeat,#f9cfca;">an</span> <span style="background:linear-gradient(#6a9cc0,#6a9cc0) 0 calc(100% - 1.6px)/100% 2px no-repeat,#f9cfca;">ABR</span> <span style="background:linear-gradient(#6a9cc0,#6a9cc0) 0 calc(100% - 1.6px)/100% 2px no-repeat,#f9cfca;">Borrowing</span> <span style="background:linear-gradient(#6a9cc0,#6a9cc0) 0 calc(100% - 1.6px)/100% 2px no-repeat,#f9cfca;">at</span> <span style="background:linear-gradient(#6a9cc0,#6a9cc0) 0 calc(100% - 1.6px)/100% 2px no-repeat,#f9cfca;">the</span> <span style="background:linear-gradient(#6a9cc0,#6a9cc0) 0 calc(100% - 1.6px)/100% 2px no-repeat,#f9cfca;">Alternate</span> <span style="background:linear-gradient(#6a9cc0,#6a9cc0) 0 calc(100% - 1.6px)/100% 2px no-repeat,#f9cfca;">Base</span> <span style="background:linear-gradient(#6a9cc0,#6a9cc0) 0 calc(100% - 1.6px)/100% 2px no-repeat,#f9cfca;">Rate</span> <span style="background:linear-gradient(#6a9cc0,#6a9cc0) 0 calc(100% - 1.6px)/100% 2px no-repeat,#f9cfca;">and</span> <span style="background:linear-gradient(#6a9cc0,#6a9cc0) 0 calc(100% - 1.6px)/100% 2px no-repeat,#f9cfca;">(ii)</span> <span style="background:linear-gradient(#6a9cc0,#6a9cc0) 0 calc(100% - 1.6px)/100% 2px no-repeat,#f9cfca;">if</span> <span style="background:linear-gradient(#6a9cc0,#6a9cc0) 0 calc(100% - 1.6px)/100% 2px no-repeat,#f9cfca;">such</span> <span style="background:linear-gradient(#6a9cc0,#6a9cc0) 0 calc(100% - 1.6px)/100% 2px no-repeat,#f9cfca;">Borrowing</span> <span style="background:linear-gradient(#6a9cc0,#6a9cc0) 0 calc(100% - 1.6px)/100% 2px no-repeat,#f9cfca;">shall</span></div>
<div class="t dl" style="left:84.60px;top:326.50px;transform:scaleX(1.0071)"><span style="background:linear-gradient(#6a9cc0,#6a9cc0) 0 calc(100% - 1.6px)/100% 2px no-repeat,#f9cfca;">be</span> <span style="background:linear-gradient(#6a9cc0,#6a9cc0) 0 calc(100% - 1.6px)/100% 2px no-repeat,#f9cfca;">requested</span> <span style="background:linear-gradient(#6a9cc0,#6a9cc0) 0 calc(100% - 1.6px)/100% 2px no-repeat,#f9cfca;">in</span> <span style="background:linear-gradient(#6a9cc0,#6a9cc0) 0 calc(100% - 1.6px)/100% 2px no-repeat,#f9cfca;">any</span> <span style="background:linear-gradient(#6a9cc0,#6a9cc0) 0 calc(100% - 1.6px)/100% 2px no-repeat,#f9cfca;">Foreign</span> <span style="background:linear-gradient(#6a9cc0,#6a9cc0) 0 calc(100% - 1.6px)/100% 2px no-repeat,#f9cfca;">Currency,</span> <span style="background:linear-gradient(#6a9cc0,#6a9cc0) 0 calc(100% - 1.6px)/100% 2px no-repeat,#f9cfca;">the</span> <span style="background:linear-gradient(#6a9cc0,#6a9cc0) 0 calc(100% - 1.6px)/100% 2px no-repeat,#f9cfca;">LIBO</span> <span style="background:linear-gradient(#6a9cc0,#6a9cc0) 0 calc(100% - 1.6px)/100% 2px no-repeat,#f9cfca;">Rate</span> <span style="background:linear-gradient(#6a9cc0,#6a9cc0) 0 calc(100% - 1.6px)/100% 2px no-repeat,#f9cfca;">shall</span> <span style="background:linear-gradient(#6a9cc0,#6a9cc0) 0 calc(100% - 1.6px)/100% 2px no-repeat,#f9cfca;">be</span> <span style="background:linear-gradient(#6a9cc0,#6a9cc0) 0 calc(100% - 1.6px)/100% 2px no-repeat,#f9cfca;">equal</span> <span style="background:linear-gradient(#6a9cc0,#6a9cc0) 0 calc(100% - 1.6px)/100% 2px no-repeat,#f9cfca;">to</span> <span style="background:linear-gradient(#6a9cc0,#6a9cc0) 0 calc(100% - 1.6px)/100% 2px no-repeat,#f9cfca;">the</span> <span style="background:linear-gradient(#6a9cc0,#6a9cc0) 0 calc(100% - 1.6px)/100% 2px no-repeat,#f9cfca;">rate</span> <span style="background:linear-gradient(#6a9cc0,#6a9cc0) 0 calc(100% - 1.6px)/100% 2px no-repeat,#f9cfca;">determined</span> <span style="background:linear-gradient(#6a9cc0,#6a9cc0) 0 calc(100% - 1.6px)/100% 2px no-repeat,#f9cfca;">by</span> <span style="background:linear-gradient(#6a9cc0,#6a9cc0) 0 calc(100% - 1.6px)/100% 2px no-repeat,#f9cfca;">the</span></div>
<div class="t dl" style="left:84.60px;top:343.20px;transform:scaleX(1.0303)"><span style="background:linear-gradient(#6a9cc0,#6a9cc0) 0 calc(100% - 1.6px)/100% 2px no-repeat,#f9cfca;">Administrative</span> <span style="background:linear-gradient(#5cc0ea,#5cc0ea) 0 calc(100% - 1.6px)/100% 2px no-repeat;">Agent</span> <span style="background:linear-gradient(#5cc0ea,#5cc0ea) 0 calc(100% - 1.6px)/100% 2px no-repeat;">in</span> <span style="background:linear-gradient(#5cc0ea,#5cc0ea) 0 calc(100% - 1.6px)/100% 2px no-repeat;">its</span> <span style="background:linear-gradient(#5cc0ea,#5cc0ea) 0 calc(100% - 1.6px)/100% 2px no-repeat;">reasonable</span> <span style="background:linear-gradient(#5cc0ea,#5cc0ea) 0 calc(100% - 1.6px)/100% 2px no-repeat;">discretion</span> <span style="background:linear-gradient(#5cc0ea,#5cc0ea) 0 calc(100% - 1.6px)/100% 2px no-repeat;">after</span> <span style="background:linear-gradient(#5cc0ea,#5cc0ea) 0 calc(100% - 1.6px)/100% 2px no-repeat;">consultation</span> <span style="background:linear-gradient(#5cc0ea,#5cc0ea) 0 calc(100% - 1.6px)/100% 2px no-repeat;">with</span> <span style="background:linear-gradient(#5cc0ea,#5cc0ea) 0 calc(100% - 1.6px)/100% 2px no-repeat;">the</span> <span style="background:linear-gradient(#5cc0ea,#5cc0ea) 0 calc(100% - 1.6px)/100% 2px no-repeat;">Borrower</span> <span style="background:linear-gradient(#5cc0ea,#5cc0ea) 0 calc(100% - 1.6px)/100% 2px no-repeat;">and</span> <span style="background:linear-gradient(#5cc0ea,#5cc0ea) 0 calc(100% - 1.6px)/100% 2px no-repeat;">consented</span> <span style="background:linear-gradient(#5cc0ea,#5cc0ea) 0 calc(100% - 1.6px)/100% 2px no-repeat;">to</span></div>
<div class="t dl" style="left:84.60px;top:359.90px;transform:scaleX(1.0097)"><span style="background:linear-gradient(#5cc0ea,#5cc0ea) 0 calc(100% - 1.6px)/100% 2px no-repeat;">in</span> <span style="background:linear-gradient(#5cc0ea,#5cc0ea) 0 calc(100% - 1.6px)/100% 2px no-repeat;">writing</span> <span style="background:linear-gradient(#5cc0ea,#5cc0ea) 0 calc(100% - 1.6px)/100% 2px no-repeat;">by</span> <span style="background:linear-gradient(#5cc0ea,#5cc0ea) 0 calc(100% - 1.6px)/100% 2px no-repeat;">the</span> <span style="background:linear-gradient(#5cc0ea,#5cc0ea) 0 calc(100% - 1.6px)/100% 2px no-repeat;">Revolving</span> <span style="background:linear-gradient(#5cc0ea,#5cc0ea) 0 calc(100% - 1.6px)/100% 2px no-repeat;">Lenders</span> <span style="background:linear-gradient(#5cc0ea,#5cc0ea) 0 calc(100% - 1.6px)/100% 2px no-repeat;">holding</span> <span style="background:linear-gradient(#5cc0ea,#5cc0ea) 0 calc(100% - 1.6px)/100% 2px no-repeat;">more</span> <span style="background:linear-gradient(#5cc0ea,#5cc0ea) 0 calc(100% - 1.6px)/100% 2px no-repeat;">than</span> <span style="background:linear-gradient(#5cc0ea,#5cc0ea) 0 calc(100% - 1.6px)/100% 2px no-repeat,#cdebe5;">50%</span> <span style="background:linear-gradient(#5cc0ea,#5cc0ea) 0 calc(100% - 1.6px)/100% 2px no-repeat;">of</span> <span style="background:linear-gradient(#5cc0ea,#5cc0ea) 0 calc(100% - 1.6px)/100% 2px no-repeat;">the</span> <span style="background:linear-gradient(#5cc0ea,#5cc0ea) 0 calc(100% - 1.6px)/100% 2px no-repeat;">aggregate</span> <span style="background:linear-gradient(#5cc0ea,#5cc0ea) 0 calc(100% - 1.6px)/100% 2px no-repeat;">Revolving</span> <span style="background:linear-gradient(#5cc0ea,#5cc0ea) 0 calc(100% - 1.6px)/100% 2px no-repeat;">Commitments</span> <span style="background:linear-gradient(#5cc0ea,#5cc0ea) 0 calc(100% - 1.6px)/100% 2px no-repeat;">at</span></div>
<div class="t dl" style="left:84.60px;top:376.60px;transform:scaleX(1.0268)"><span style="background:linear-gradient(#5cc0ea,#5cc0ea) 0 calc(100% - 1.6px)/100% 2px no-repeat;">such</span> <span style="background:linear-gradient(#5cc0ea,#5cc0ea) 0 calc(100% - 1.6px)/100% 2px no-repeat;">time</span> <span style="background:linear-gradient(#5cc0ea,#5cc0ea) 0 calc(100% - 1.6px)/100% 2px no-repeat;">(the</span> <span style="background:linear-gradient(#5cc0ea,#5cc0ea) 0 calc(100% - 1.6px)/100% 2px no-repeat;">“Alternative</span> <span style="background:linear-gradient(#5cc0ea,#5cc0ea) 0 calc(100% - 1.6px)/100% 2px no-repeat;">Rate”);</span> <span style="background:linear-gradient(#5cc0ea,#5cc0ea) 0 calc(100% - 1.6px)/100% 2px no-repeat;">provided,</span>  <span style="background:linear-gradient(#5cc0ea,#5cc0ea) 0 calc(100% - 1.6px)/100% 2px no-repeat;">however,</span> <span style="background:linear-gradient(#5cc0ea,#5cc0ea) 0 calc(100% - 1.6px)/100% 2px no-repeat;">that</span> <span style="background:linear-gradient(#5cc0ea,#5cc0ea) 0 calc(100% - 1.6px)/100% 2px no-repeat;">until</span> <span style="background:linear-gradient(#5cc0ea,#5cc0ea) 0 calc(100% - 1.6px)/100% 2px no-repeat;">such</span> <span style="background:linear-gradient(#5cc0ea,#5cc0ea) 0 calc(100% - 1.6px)/100% 2px no-repeat;">time</span> <span style="background:linear-gradient(#5cc0ea,#5cc0ea) 0 calc(100% - 1.6px)/100% 2px no-repeat;">as</span> <span style="background:linear-gradient(#5cc0ea,#5cc0ea) 0 calc(100% - 1.6px)/100% 2px no-repeat;">the</span> <span style="background:linear-gradient(#5cc0ea,#5cc0ea) 0 calc(100% - 1.6px)/100% 2px no-repeat;">Alternative</span> <span style="background:linear-gradient(#5cc0ea,#5cc0ea) 0 calc(100% - 1.6px)/100% 2px no-repeat;">Rate</span> <span style="background:linear-gradient(#5cc0ea,#5cc0ea) 0 calc(100% - 1.6px)/100% 2px no-repeat;">shall</span></div>
<div class="t dl" style="left:84.60px;top:393.30px;transform:scaleX(1.0003)"><span style="background:linear-gradient(#5cc0ea,#5cc0ea) 0 calc(100% - 1.6px)/100% 2px no-repeat;">be</span> <span style="background:linear-gradient(#5cc0ea,#5cc0ea) 0 calc(100% - 1.6px)/100% 2px no-repeat;">determined</span> <span style="background:linear-gradient(#5cc0ea,#5cc0ea) 0 calc(100% - 1.6px)/100% 2px no-repeat;">and</span> <span style="background:linear-gradient(#5cc0ea,#5cc0ea) 0 calc(100% - 1.6px)/100% 2px no-repeat;">so</span> <span style="background:linear-gradient(#5cc0ea,#5cc0ea) 0 calc(100% - 1.6px)/100% 2px no-repeat;">consented</span> <span style="background:linear-gradient(#5cc0ea,#5cc0ea) 0 calc(100% - 1.6px)/100% 2px no-repeat;">to</span> <span style="background:linear-gradient(#5cc0ea,#5cc0ea) 0 calc(100% - 1.6px)/100% 2px no-repeat;">by</span> <span style="background:linear-gradient(#5cc0ea,#5cc0ea) 0 calc(100% - 1.6px)/100% 2px no-repeat;">such</span> <span style="background:linear-gradient(#5cc0ea,#5cc0ea) 0 calc(100% - 1.6px)/100% 2px no-repeat;">Revolving</span> <span style="background:linear-gradient(#5cc0ea,#5cc0ea) 0 calc(100% - 1.6px)/100% 2px no-repeat;">Lenders,</span> <span style="background:linear-gradient(#5cc0ea,#5cc0ea) 0 calc(100% - 1.6px)/100% 2px no-repeat;">Borrowings</span> <span style="background:linear-gradient(#5cc0ea,#5cc0ea) 0 calc(100% - 1.6px)/100% 2px no-repeat;">shall</span> <span style="background:linear-gradient(#5cc0ea,#5cc0ea) 0 calc(100% - 1.6px)/100% 2px no-repeat;">not</span> <span style="background:linear-gradient(#5cc0ea,#5cc0ea) 0 calc(100% - 1.6px)/100% 2px no-repeat;">be</span> <span style="background:linear-gradient(#5cc0ea,#5cc0ea) 0 calc(100% - 1.6px)/100% 2px no-repeat;">available</span> <span style="background:linear-gradient(#5cc0ea,#5cc0ea) 0 calc(100% - 1.6px)/100% 2px no-repeat;">in</span> <span style="background:linear-gradient(#5cc0ea,#5cc0ea) 0 calc(100% - 1.6px)/100% 2px no-repeat;">such</span></div>
<div class="t dl" style="left:84.60px;top:410.00px;transform:scaleX(0.9928)"><span style="background:linear-gradient(#5cc0ea,#5cc0ea) 0 calc(100% - 1.6px)/100% 2px no-repeat;">Foreign</span> <span style="background:linear-gradient(#5cc0ea,#5cc0ea) 0 calc(100% - 1.6px)/100% 2px no-repeat;">Currency.</span></div>
<div class="t dl" style="left:128.00px;top:443.40px;transform:scaleX(1.0246)">If prior to the commencement of any Interest Period for a Eurocurrency Borrowing:</div>
<div class="t dl" style="left:84.60px;top:443.40px;transform:scaleX(0.92)"><span style="">(b)</span></div>
<div class="t dl" style="left:128.00px;top:476.80px;transform:scaleX(1.0248)">the Administrative Agent determines (which determination shall be <span style="background:linear-gradient(#5dbf92,#5dbf92) 0 calc(100% - 1.6px)/100% 2px no-repeat;">conclusive</span> <span style="background:linear-gradient(#5dbf92,#5dbf92) 0 calc(100% - 1.6px)/100% 2px no-repeat;">and</span> <span style="background:linear-gradient(#5dbf92,#5dbf92) 0 calc(100% - 1.6px)/100% 2px no-repeat;">binding</span></div>
<div class="t dl" style="left:84.60px;top:476.80px;transform:scaleX(0.92)"><span style="">(i)</span></div>
<div class="t dl" style="left:84.60px;top:493.50px;transform:scaleX(1.0152)"><span style="background:linear-gradient(#5dbf92,#5dbf92) 0 calc(100% - 1.6px)/100% 2px no-repeat;">absent</span> <span style="background:linear-gradient(#5dbf92,#5dbf92) 0 calc(100% - 1.6px)/100% 2px no-repeat;">manifest</span> <span style="background:linear-gradient(#5dbf92,#5dbf92) 0 calc(100% - 1.6px)/100% 2px no-repeat;">error)</span> <span style="background:linear-gradient(#5dbf92,#5dbf92) 0 calc(100% - 1.6px)/100% 2px no-repeat;">that</span> <span style="background:linear-gradient(#5dbf92,#5dbf92) 0 calc(100% - 1.6px)/100% 2px no-repeat;">adequate</span> <span style="background:linear-gradient(#5dbf92,#5dbf92) 0 calc(100% - 1.6px)/100% 2px no-repeat;">and</span> <span style="background:linear-gradient(#5dbf92,#5dbf92) 0 calc(100% - 1.6px)/100% 2px no-repeat;">reasonable</span> <span style="background:linear-gradient(#5dbf92,#5dbf92) 0 calc(100% - 1.6px)/100% 2px no-repeat;">means</span> <span style="background:linear-gradient(#5dbf92,#5dbf92) 0 calc(100% - 1.6px)/100% 2px no-repeat;">do</span> <span style="background:linear-gradient(#5dbf92,#5dbf92) 0 calc(100% - 1.6px)/100% 2px no-repeat;">not</span> <span style="background:linear-gradient(#5dbf92,#5dbf92) 0 calc(100% - 1.6px)/100% 2px no-repeat;">exist</span> <span style="background:linear-gradient(#5dbf92,#5dbf92) 0 calc(100% - 1.6px)/100% 2px no-repeat;">for</span> <span style="background:linear-gradient(#5dbf92,#5dbf92) 0 calc(100% - 1.6px)/100% 2px no-repeat;">ascertaining</span> <span style="background:linear-gradient(#5dbf92,#5dbf92) 0 calc(100% - 1.6px)/100% 2px no-repeat;">(including,</span></div>
<div class="t dl" style="left:84.60px;top:510.20px;transform:scaleX(1.0082)"><span style="background:linear-gradient(#5dbf92,#5dbf92) 0 calc(100% - 1.6px)/100% 2px no-repeat;">without</span> <span style="background:linear-gradient(#5dbf92,#5dbf92) 0 calc(100% - 1.6px)/100% 2px no-repeat;">limitation,</span> <span style="background:linear-gradient(#5dbf92,#5dbf92) 0 calc(100% - 1.6px)/100% 2px no-repeat;">by</span> <span style="background:linear-gradient(#5dbf92,#5dbf92) 0 calc(100% - 1.6px)/100% 2px no-repeat;">means</span> <span style="background:linear-gradient(#5dbf92,#5dbf92) 0 calc(100% - 1.6px)/100% 2px no-repeat;">of</span> <span style="background:linear-gradient(#5dbf92,#5dbf92) 0 calc(100% - 1.6px)/100% 2px no-repeat;">an</span> <span style="background:linear-gradient(#5dbf92,#5dbf92) 0 calc(100% - 1.6px)/100% 2px no-repeat;">Interpolated</span> <span style="background:linear-gradient(#5dbf92,#5dbf92) 0 calc(100% - 1.6px)/100% 2px no-repeat;">Rate)</span> <span style="background:linear-gradient(#5dbf92,#5dbf92) 0 calc(100% - 1.6px)/100% 2px no-repeat;">the</span> <span style="background:linear-gradient(#5dbf92,#5dbf92) 0 calc(100% - 1.6px)/100% 2px no-repeat;">Adjusted</span> <span style="background:linear-gradient(#5dbf92,#5dbf92) 0 calc(100% - 1.6px)/100% 2px no-repeat;">LIBO</span> <span style="background:linear-gradient(#5dbf92,#5dbf92) 0 calc(100% - 1.6px)/100% 2px no-repeat;">Rate</span> <span style="background:linear-gradient(#5dbf92,#5dbf92) 0 calc(100% - 1.6px)/100% 2px no-repeat;">or</span> <span style="background:linear-gradient(#5dbf92,#5dbf92) 0 calc(100% - 1.6px)/100% 2px no-repeat;">the</span> <span style="background:linear-gradient(#5dbf92,#5dbf92) 0 calc(100% - 1.6px)/100% 2px no-repeat;">LIBO</span> <span style="background:linear-gradient(#5dbf92,#5dbf92) 0 calc(100% - 1.6px)/100% 2px no-repeat;">Rate,</span> <span style="background:linear-gradient(#5dbf92,#5dbf92) 0 calc(100% - 1.6px)/100% 2px no-repeat;">as</span></div>
<div class="t dl" style="left:84.60px;top:526.90px;transform:scaleX(1.0175)"><span style="background:linear-gradient(#5dbf92,#5dbf92) 0 calc(100% - 1.6px)/100% 2px no-repeat;">applicable,</span> <span style="background:linear-gradient(#5dbf92,#5dbf92) 0 calc(100% - 1.6px)/100% 2px no-repeat;">for</span> a Loan in the <span style="background:linear-gradient(#5dbf92,#5dbf92) 0 calc(100% - 1.6px)/100% 2px no-repeat;">applicable</span> <span style="background:linear-gradient(#5dbf92,#5dbf92) 0 calc(100% - 1.6px)/100% 2px no-repeat;">currency</span> <span style="background:linear-gradient(#5dbf92,#5dbf92) 0 calc(100% - 1.6px)/100% 2px no-repeat;">or</span> <span style="background:linear-gradient(#5dbf92,#5dbf92) 0 calc(100% - 1.6px)/100% 2px no-repeat;">for</span> <span style="background:linear-gradient(#5dbf92,#5dbf92) 0 calc(100% - 1.6px)/100% 2px no-repeat;">the</span> <span style="background:linear-gradient(#5dbf92,#5dbf92) 0 calc(100% - 1.6px)/100% 2px no-repeat;">applicable</span> <span style="background:linear-gradient(#5dbf92,#5dbf92) 0 calc(100% - 1.6px)/100% 2px no-repeat;">Interest</span> <span style="background:linear-gradient(#5dbf92,#5dbf92) 0 calc(100% - 1.6px)/100% 2px no-repeat;">Period;</span> <span style="background:linear-gradient(#5dbf92,#5dbf92) 0 calc(100% - 1.6px)/100% 2px no-repeat;">or</span></div>
<div class="t dl" style="left:128.00px;top:560.30px;transform:scaleX(1.0089)"><span style="background:linear-gradient(#5dbf92,#5dbf92) 0 calc(100% - 1.6px)/100% 2px no-repeat;">the</span> <span style="background:linear-gradient(#5dbf92,#5dbf92) 0 calc(100% - 1.6px)/100% 2px no-repeat;">Administrative</span> <span style="background:linear-gradient(#5dbf92,#5dbf92) 0 calc(100% - 1.6px)/100% 2px no-repeat;">Agent</span> <span style="background:linear-gradient(#5dbf92,#5dbf92) 0 calc(100% - 1.6px)/100% 2px no-repeat;">is</span> <span style="background:linear-gradient(#5dbf92,#5dbf92) 0 calc(100% - 1.6px)/100% 2px no-repeat;">advised</span> <span style="background:linear-gradient(#5dbf92,#5dbf92) 0 calc(100% - 1.6px)/100% 2px no-repeat;">by</span> <span style="background:linear-gradient(#5dbf92,#5dbf92) 0 calc(100% - 1.6px)/100% 2px no-repeat;">the</span> <span style="background:linear-gradient(#5dbf92,#5dbf92) 0 calc(100% - 1.6px)/100% 2px no-repeat;">Required</span> <span style="background:linear-gradient(#5dbf92,#5dbf92) 0 calc(100% - 1.6px)/100% 2px no-repeat;">Lenders</span> <span style="background:linear-gradient(#5dbf92,#5dbf92) 0 calc(100% - 1.6px)/100% 2px no-repeat;">that</span> <span style="background:linear-gradient(#5dbf92,#5dbf92) 0 calc(100% - 1.6px)/100% 2px no-repeat;">the</span> <span style="background:linear-gradient(#5dbf92,#5dbf92) 0 calc(100% - 1.6px)/100% 2px no-repeat;">Adjusted</span> <span style="background:linear-gradient(#5dbf92,#5dbf92) 0 calc(100% - 1.6px)/100% 2px no-repeat;">LIBO</span> <span style="background:linear-gradient(#5dbf92,#5dbf92) 0 calc(100% - 1.6px)/100% 2px no-repeat;">Rate</span> <span style="background:linear-gradient(#5dbf92,#5dbf92) 0 calc(100% - 1.6px)/100% 2px no-repeat;">or</span> <span style="background:linear-gradient(#5dbf92,#5dbf92) 0 calc(100% - 1.6px)/100% 2px no-repeat;">the</span></div>
<div class="t dl" style="left:84.60px;top:560.30px;transform:scaleX(0.92)"><span style="background:linear-gradient(#5dbf92,#5dbf92) 0 100%/100% 2px no-repeat;">(ii)</span></div>
<div class="t dl" style="left:84.60px;top:577.00px;transform:scaleX(1.0048)">LIBO <span style="background:linear-gradient(#5dbf92,#5dbf92) 0 calc(100% - 1.6px)/100% 2px no-repeat;">Rate,</span> <span style="background:linear-gradient(#5dbf92,#5dbf92) 0 calc(100% - 1.6px)/100% 2px no-repeat;">as</span> <span style="background:linear-gradient(#5dbf92,#5dbf92) 0 calc(100% - 1.6px)/100% 2px no-repeat;">applicable,</span> <span style="background:linear-gradient(#5dbf92,#5dbf92) 0 calc(100% - 1.6px)/100% 2px no-repeat;">for</span> a Loan in the <span style="background:linear-gradient(#5dbf92,#5dbf92) 0 calc(100% - 1.6px)/100% 2px no-repeat;">applicable</span> <span style="background:linear-gradient(#5dbf92,#5dbf92) 0 calc(100% - 1.6px)/100% 2px no-repeat;">currency</span> <span style="background:linear-gradient(#5dbf92,#5dbf92) 0 calc(100% - 1.6px)/100% 2px no-repeat;">or</span> <span style="background:linear-gradient(#5dbf92,#5dbf92) 0 calc(100% - 1.6px)/100% 2px no-repeat;">for</span> <span style="background:linear-gradient(#5dbf92,#5dbf92) 0 calc(100% - 1.6px)/100% 2px no-repeat;">the</span> <span style="background:linear-gradient(#5dbf92,#5dbf92) 0 calc(100% - 1.6px)/100% 2px no-repeat;">applicable</span> <span style="background:linear-gradient(#5dbf92,#5dbf92) 0 calc(100% - 1.6px)/100% 2px no-repeat;">Interest</span> <span style="background:linear-gradient(#5dbf92,#5dbf92) 0 calc(100% - 1.6px)/100% 2px no-repeat;">Period</span> <span style="background:linear-gradient(#5dbf92,#5dbf92) 0 calc(100% - 1.6px)/100% 2px no-repeat;">will</span></div>
<div class="t dl" style="left:84.60px;top:593.70px;transform:scaleX(1.0210)"><span style="background:linear-gradient(#5dbf92,#5dbf92) 0 calc(100% - 1.6px)/100% 2px no-repeat;">not</span> <span style="background:linear-gradient(#5dbf92,#5dbf92) 0 calc(100% - 1.6px)/100% 2px no-repeat;">adequately</span> <span style="background:linear-gradient(#5dbf92,#5dbf92) 0 calc(100% - 1.6px)/100% 2px no-repeat;">and</span> <span style="background:linear-gradient(#5dbf92,#5dbf92) 0 calc(100% - 1.6px)/100% 2px no-repeat;">fairly</span> <span style="background:linear-gradient(#5dbf92,#5dbf92) 0 calc(100% - 1.6px)/100% 2px no-repeat;">reflect</span> <span style="background:linear-gradient(#5dbf92,#5dbf92) 0 calc(100% - 1.6px)/100% 2px no-repeat;">the</span> <span style="background:linear-gradient(#5dbf92,#5dbf92) 0 calc(100% - 1.6px)/100% 2px no-repeat;">cost</span> <span style="background:linear-gradient(#5dbf92,#5dbf92) 0 calc(100% - 1.6px)/100% 2px no-repeat;">to</span> <span style="background:linear-gradient(#5dbf92,#5dbf92) 0 calc(100% - 1.6px)/100% 2px no-repeat;">such</span> <span style="background:linear-gradient(#5dbf92,#5dbf92) 0 calc(100% - 1.6px)/100% 2px no-repeat;">Lenders</span> <span style="background:linear-gradient(#5dbf92,#5dbf92) 0 calc(100% - 1.6px)/100% 2px no-repeat;">(or</span> <span style="background:linear-gradient(#5dbf92,#5dbf92) 0 calc(100% - 1.6px)/100% 2px no-repeat;">Lender)</span> <span style="background:linear-gradient(#5dbf92,#5dbf92) 0 calc(100% - 1.6px)/100% 2px no-repeat;">of</span> <span style="background:linear-gradient(#5dbf92,#5dbf92) 0 calc(100% - 1.6px)/100% 2px no-repeat;">making</span> <span style="background:linear-gradient(#5dbf92,#5dbf92) 0 calc(100% - 1.6px)/100% 2px no-repeat;">or</span> <span style="background:linear-gradient(#5dbf92,#5dbf92) 0 calc(100% - 1.6px)/100% 2px no-repeat;">maintaining</span> <span style="background:linear-gradient(#5dbf92,#5dbf92) 0 calc(100% - 1.6px)/100% 2px no-repeat;">their</span></div>
<div class="t dl" style="left:84.60px;top:610.40px;transform:scaleX(1.0075)"><span style="background:linear-gradient(#5dbf92,#5dbf92) 0 calc(100% - 1.6px)/100% 2px no-repeat;">Loans</span> <span style="background:linear-gradient(#5dbf92,#5dbf92) 0 calc(100% - 1.6px)/100% 2px no-repeat;">included</span> <span style="background:linear-gradient(#5dbf92,#5dbf92) 0 calc(100% - 1.6px)/100% 2px no-repeat;">in</span> <span style="background:linear-gradient(#5dbf92,#5dbf92) 0 calc(100% - 1.6px)/100% 2px no-repeat;">such</span> <span style="background:linear-gradient(#5dbf92,#5dbf92) 0 calc(100% - 1.6px)/100% 2px no-repeat;">Borrowing</span> <span style="background:linear-gradient(#5dbf92,#5dbf92) 0 calc(100% - 1.6px)/100% 2px no-repeat;">for</span> <span style="background:linear-gradient(#5dbf92,#5dbf92) 0 calc(100% - 1.6px)/100% 2px no-repeat;">such</span> <span style="background:linear-gradient(#5dbf92,#5dbf92) 0 calc(100% - 1.6px)/100% 2px no-repeat;">Interest</span> <span style="background:linear-gradient(#5dbf92,#5dbf92) 0 calc(100% - 1.6px)/100% 2px no-repeat;">Period;</span></div>
<div class="t dl" style="left:84.60px;top:643.80px;transform:scaleX(1.0284)"><span style="background:linear-gradient(#5dbf92,#5dbf92) 0 calc(100% - 1.6px)/100% 2px no-repeat;">then</span> <span style="background:linear-gradient(#5dbf92,#5dbf92) 0 calc(100% - 1.6px)/100% 2px no-repeat;">the</span> <span style="background:linear-gradient(#5dbf92,#5dbf92) 0 calc(100% - 1.6px)/100% 2px no-repeat;">Administrative</span> <span style="background:linear-gradient(#5dbf92,#5dbf92) 0 calc(100% - 1.6px)/100% 2px no-repeat;">Agent</span> <span style="background:linear-gradient(#5dbf92,#5dbf92) 0 calc(100% - 1.6px)/100% 2px no-repeat;">shall</span> <span style="background:linear-gradient(#5dbf92,#5dbf92) 0 calc(100% - 1.6px)/100% 2px no-repeat;">give</span> <span style="background:linear-gradient(#5dbf92,#5dbf92) 0 calc(100% - 1.6px)/100% 2px no-repeat;">notice</span> <span style="background:linear-gradient(#5dbf92,#5dbf92) 0 calc(100% - 1.6px)/100% 2px no-repeat;">thereof</span> <span style="background:linear-gradient(#5dbf92,#5dbf92) 0 calc(100% - 1.6px)/100% 2px no-repeat;">to</span> <span style="background:linear-gradient(#5dbf92,#5dbf92) 0 calc(100% - 1.6px)/100% 2px no-repeat;">the</span> <span style="background:linear-gradient(#5dbf92,#5dbf92) 0 calc(100% - 1.6px)/100% 2px no-repeat;">Borrower</span> <span style="background:linear-gradient(#5dbf92,#5dbf92) 0 calc(100% - 1.6px)/100% 2px no-repeat;">and</span> <span style="background:linear-gradient(#5dbf92,#5dbf92) 0 calc(100% - 1.6px)/100% 2px no-repeat;">the</span> <span style="background:linear-gradient(#5dbf92,#5dbf92) 0 calc(100% - 1.6px)/100% 2px no-repeat;">Lenders</span> <span style="background:linear-gradient(#5dbf92,#5dbf92) 0 calc(100% - 1.6px)/100% 2px no-repeat;">through</span> <span style="background:linear-gradient(#5dbf92,#5dbf92) 0 calc(100% - 1.6px)/100% 2px no-repeat;">any</span></div>
<div class="t dl" style="left:84.60px;top:660.50px;transform:scaleX(1.0109)"><span style="background:linear-gradient(#5dbf92,#5dbf92) 0 calc(100% - 1.6px)/100% 2px no-repeat;">Electronic</span> <span style="background:linear-gradient(#5dbf92,#5dbf92) 0 calc(100% - 1.6px)/100% 2px no-repeat;">System</span> <span style="background:linear-gradient(#5dbf92,#5dbf92) 0 calc(100% - 1.6px)/100% 2px no-repeat;">as</span> <span style="background:linear-gradient(#5dbf92,#5dbf92) 0 calc(100% - 1.6px)/100% 2px no-repeat;">provided</span> <span style="background:linear-gradient(#5dbf92,#5dbf92) 0 calc(100% - 1.6px)/100% 2px no-repeat;">in</span> <span style="background:linear-gradient(#5dbf92,#5dbf92) 0 calc(100% - 1.6px)/100% 2px no-repeat;">Section</span> <span style="background:linear-gradient(#5dbf92,#5dbf92) 0 calc(100% - 1.6px)/100% 2px no-repeat;">9.01</span> <span style="background:linear-gradient(#5dbf92,#5dbf92) 0 calc(100% - 1.6px)/100% 2px no-repeat;">as</span> <span style="background:linear-gradient(#5dbf92,#5dbf92) 0 calc(100% - 1.6px)/100% 2px no-repeat;">promptly</span> <span style="background:linear-gradient(#5dbf92,#5dbf92) 0 calc(100% - 1.6px)/100% 2px no-repeat;">as</span> <span style="background:linear-gradient(#5dbf92,#5dbf92) 0 calc(100% - 1.6px)/100% 2px no-repeat;">practicable</span> <span style="background:linear-gradient(#5dbf92,#5dbf92) 0 calc(100% - 1.6px)/100% 2px no-repeat;">thereafter</span> <span style="background:linear-gradient(#5dbf92,#5dbf92) 0 calc(100% - 1.6px)/100% 2px no-repeat;">and,</span> <span style="background:linear-gradient(#5dbf92,#5dbf92) 0 calc(100% - 1.6px)/100% 2px no-repeat;">until</span> <span style="background:linear-gradient(#5dbf92,#5dbf92) 0 calc(100% - 1.6px)/100% 2px no-repeat;">the</span></div>
<div class="t dl" style="left:84.60px;top:677.20px;transform:scaleX(1.0191)"><span style="background:linear-gradient(#5dbf92,#5dbf92) 0 calc(100% - 1.6px)/100% 2px no-repeat;">Administrative</span> <span style="background:linear-gradient(#5dbf92,#5dbf92) 0 calc(100% - 1.6px)/100% 2px no-repeat;">Agent</span> <span style="background:linear-gradient(#5dbf92,#5dbf92) 0 calc(100% - 1.6px)/100% 2px no-repeat;">notifies</span> <span style="background:linear-gradient(#5dbf92,#5dbf92) 0 calc(100% - 1.6px)/100% 2px no-repeat;">the</span> <span style="background:linear-gradient(#5dbf92,#5dbf92) 0 calc(100% - 1.6px)/100% 2px no-repeat;">Borrower</span> <span style="background:linear-gradient(#5dbf92,#5dbf92) 0 calc(100% - 1.6px)/100% 2px no-repeat;">and</span> <span style="background:linear-gradient(#5dbf92,#5dbf92) 0 calc(100% - 1.6px)/100% 2px no-repeat;">the</span> <span style="background:linear-gradient(#5dbf92,#5dbf92) 0 calc(100% - 1.6px)/100% 2px no-repeat;">Lenders</span> <span style="background:linear-gradient(#5dbf92,#5dbf92) 0 calc(100% - 1.6px)/100% 2px no-repeat;">that</span> <span style="background:linear-gradient(#5dbf92,#5dbf92) 0 calc(100% - 1.6px)/100% 2px no-repeat;">the</span> <span style="background:linear-gradient(#5dbf92,#5dbf92) 0 calc(100% - 1.6px)/100% 2px no-repeat;">circumstances</span> <span style="background:linear-gradient(#5dbf92,#5dbf92) 0 calc(100% - 1.6px)/100% 2px no-repeat;">giving</span> <span style="background:linear-gradient(#5dbf92,#5dbf92) 0 calc(100% - 1.6px)/100% 2px no-repeat;">rise</span> <span style="background:linear-gradient(#5dbf92,#5dbf92) 0 calc(100% - 1.6px)/100% 2px no-repeat;">to</span> <span style="background:linear-gradient(#5dbf92,#5dbf92) 0 calc(100% - 1.6px)/100% 2px no-repeat;">such</span></div>
<div class="t dl" style="left:84.60px;top:693.90px;transform:scaleX(1.0140)"><span style="background:linear-gradient(#5dbf92,#5dbf92) 0 calc(100% - 1.6px)/100% 2px no-repeat;">notice</span> <span style="background:linear-gradient(#5dbf92,#5dbf92) 0 calc(100% - 1.6px)/100% 2px no-repeat;">no</span> <span style="background:linear-gradient(#5dbf92,#5dbf92) 0 calc(100% - 1.6px)/100% 2px no-repeat;">longer</span> <span style="background:linear-gradient(#5dbf92,#5dbf92) 0 calc(100% - 1.6px)/100% 2px no-repeat;">exist,</span> <span style="background:linear-gradient(#5dbf92,#5dbf92) 0 calc(100% - 1.6px)/100% 2px no-repeat;">(i)</span> <span style="background:linear-gradient(#5dbf92,#5dbf92) 0 calc(100% - 1.6px)/100% 2px no-repeat;">any</span> <span style="background:linear-gradient(#5dbf92,#5dbf92) 0 calc(100% - 1.6px)/100% 2px no-repeat;">Interest</span> <span style="background:linear-gradient(#5dbf92,#5dbf92) 0 calc(100% - 1.6px)/100% 2px no-repeat;">Election</span> <span style="background:linear-gradient(#5dbf92,#5dbf92) 0 calc(100% - 1.6px)/100% 2px no-repeat;">Request</span> <span style="background:linear-gradient(#5dbf92,#5dbf92) 0 calc(100% - 1.6px)/100% 2px no-repeat;">that</span> <span style="background:linear-gradient(#5dbf92,#5dbf92) 0 calc(100% - 1.6px)/100% 2px no-repeat;">requests</span> <span style="background:linear-gradient(#5dbf92,#5dbf92) 0 calc(100% - 1.6px)/100% 2px no-repeat;">the</span> <span style="background:linear-gradient(#5dbf92,#5dbf92) 0 calc(100% - 1.6px)/100% 2px no-repeat;">conversion</span> <span style="background:linear-gradient(#5dbf92,#5dbf92) 0 calc(100% - 1.6px)/100% 2px no-repeat;">of</span> <span style="background:linear-gradient(#5dbf92,#5dbf92) 0 calc(100% - 1.6px)/100% 2px no-repeat;">any</span> <span style="background:linear-gradient(#5dbf92,#5dbf92) 0 calc(100% - 1.6px)/100% 2px no-repeat;">Borrowing</span></div>
<div class="t dl" style="left:84.60px;top:710.60px;transform:scaleX(1.0225)"><span style="background:linear-gradient(#5dbf92,#5dbf92) 0 calc(100% - 1.6px)/100% 2px no-repeat;">to,</span> <span style="background:linear-gradient(#5dbf92,#5dbf92) 0 calc(100% - 1.6px)/100% 2px no-repeat;">or</span> <span style="background:linear-gradient(#5dbf92,#5dbf92) 0 calc(100% - 1.6px)/100% 2px no-repeat;">continuation</span> <span style="background:linear-gradient(#5dbf92,#5dbf92) 0 calc(100% - 1.6px)/100% 2px no-repeat;">of</span> <span style="background:linear-gradient(#5dbf92,#5dbf92) 0 calc(100% - 1.6px)/100% 2px no-repeat;">any</span> <span style="background:linear-gradient(#5dbf92,#5dbf92) 0 calc(100% - 1.6px)/100% 2px no-repeat;">Borrowing</span> <span style="background:linear-gradient(#5dbf92,#5dbf92) 0 calc(100% - 1.6px)/100% 2px no-repeat;">as,</span> <span style="background:linear-gradient(#5dbf92,#5dbf92) 0 calc(100% - 1.6px)/100% 2px no-repeat;">a</span> <span style="background:linear-gradient(#5dbf92,#5dbf92) 0 calc(100% - 1.6px)/100% 2px no-repeat;">Eurocurrency</span> <span style="background:linear-gradient(#5dbf92,#5dbf92) 0 calc(100% - 1.6px)/100% 2px no-repeat;">Borrowing</span> <span style="background:linear-gradient(#5dbf92,#5dbf92) 0 calc(100% - 1.6px)/100% 2px no-repeat;">in</span> <span style="background:linear-gradient(#5dbf92,#5dbf92) 0 calc(100% - 1.6px)/100% 2px no-repeat;">the</span> <span style="background:linear-gradient(#5dbf92,#5dbf92) 0 calc(100% - 1.6px)/100% 2px no-repeat;">applicable</span> <span style="background:linear-gradient(#5dbf92,#5dbf92) 0 calc(100% - 1.6px)/100% 2px no-repeat;">currency</span> <span style="background:linear-gradient(#5dbf92,#5dbf92) 0 calc(100% - 1.6px)/100% 2px no-repeat;">or</span> <span style="background:linear-gradient(#5dbf92,#5dbf92) 0 calc(100% - 1.6px)/100% 2px no-repeat;">for</span> <span style="background:linear-gradient(#5dbf92,#5dbf92) 0 calc(100% - 1.6px)/100% 2px no-repeat;">the</span></div>
<div class="t dl" style="left:84.60px;top:727.30px;transform:scaleX(1.0050)"><span style="background:linear-gradient(#5dbf92,#5dbf92) 0 calc(100% - 1.6px)/100% 2px no-repeat;">applicable</span> <span style="background:linear-gradient(#5dbf92,#5dbf92) 0 calc(100% - 1.6px)/100% 2px no-repeat;">Interest</span> <span style="background:linear-gradient(#5dbf92,#5dbf92) 0 calc(100% - 1.6px)/100% 2px no-repeat;">Period,</span> <span style="background:linear-gradient(#5dbf92,#5dbf92) 0 calc(100% - 1.6px)/100% 2px no-repeat;">as</span> <span style="background:linear-gradient(#5dbf92,#5dbf92) 0 calc(100% - 1.6px)/100% 2px no-repeat;">the</span> <span style="background:linear-gradient(#5dbf92,#5dbf92) 0 calc(100% - 1.6px)/100% 2px no-repeat;">case</span> <span style="background:linear-gradient(#5dbf92,#5dbf92) 0 calc(100% - 1.6px)/100% 2px no-repeat;">may</span> <span style="background:linear-gradient(#5dbf92,#5dbf92) 0 calc(100% - 1.6px)/100% 2px no-repeat;">be,</span> shall be ineffective, (ii) if any Borrowing Request requests</div>
<div class="t dl" style="left:84.60px;top:744.00px;transform:scaleX(1.0007)">a Eurocurrency Borrowing in dollars, such Borrowing shall be made as an ABR Borrowing and (iii) if any</div>
<div class="t dl" style="left:84.60px;top:760.70px;transform:scaleX(1.0023)">Borrowing Request requests a Eurocurrency Borrowing in a Foreign Currency, then the LIBO Rate for</div>
</div>
<div class="a" style="left:1055.3px;top:45px;width:385px;height:847px;background:#f7f7f7"></div>
<div class="a" style="left:1065.3px;top:58.5px;width:361px;height:39px;background:#fff;border:1px solid #d6d6d6"></div>
<div class="t " style="left:1071.20px;top:72.82px;font-size:11.2px;line-height:11.2px;color:#2a2a2a">LIBOR Review</div>
<svg class="a" style="left:1398px;top:70px" width="20" height="16" viewBox="0 0 20 16"><path d="M4.1 2.9 Q10.5 6.5 16.9 2.9 L10.5 13.8 Z" fill="#a5a8b0"/></svg>
<div class="a" style="left:1065.3px;top:115.5px;width:336px;height:39px;background:#fff;border:1px solid #c9cfd8"></div>
<svg class="a" style="left:1069px;top:122px" width="24" height="24" viewBox="0 0 24 24"><path d="M3 2.5 H20.8 L14 10.5 V20.5 L10.2 17 V10.5 Z" fill="none" stroke="#9ea3aa" stroke-width="1.7" stroke-linejoin="miter"/></svg>
<div class="t " style="left:1096.50px;top:129.21px;font-size:11.8px;line-height:11.8px;color:#7a7f88">Filter</div>
<svg class="a" style="left:1409px;top:124px" width="24" height="22" viewBox="0 0 24 22"><path d="M12 1 L17 9 Q12 7.6 7 9 Z M7 12.8 Q12 14.2 17 12.8 L12 20.6 Z" fill="#a9acb2"/><rect x="2" y="10" width="20" height="2" fill="#a9acb2"/></svg>
<div class="a" style="left:1065.3px;top:165px;width:365.5px;height:727px;background:#fff;border-left:1px solid #e0e0e0;border-right:1px solid #d8d8d8"></div>
<div class="a" style="left:1072.0px;top:176.3px;width:10px;height:10px;border-radius:50%;background:#58c096"></div>
<div class="t " style="left:1086.00px;top:176.07px;font-size:10.9px;line-height:10.9px;color:#222;font-weight:bold;letter-spacing:-0.076px">Fallback Language</div>
<svg class="a" style="left:1358px;top:176px" width="24" height="14" viewBox="0 0 24 14"><g fill="none" stroke="#ee5b3f" stroke-width="1.9"><rect x="2.6" y="2.0" width="11.2" height="7.2" rx="3.6"/><rect x="9.4" y="4.4" width="11.4" height="7.2" rx="3.6"/></g></svg>
<div class="t " style="left:1086.00px;top:198.12px;font-size:12.5px;line-height:12.5px;color:#1e1e1e;letter-spacing:0.450px">Borrowing shall be requested in dollars, then such</div>
<div class="t " style="left:1086.00px;top:218.12px;font-size:12.5px;line-height:12.5px;color:#1e1e1e;letter-spacing:0.408px">Borrowing shall be made as an ABR Borrowing at the</div>
<div class="t " style="left:1086.00px;top:238.12px;font-size:12.5px;line-height:12.5px;color:#1e1e1e;letter-spacing:0.444px">Alternate Base Rate and (ii) if such Borrowing shall</div>
<div class="a" style="left:1402.2px;top:194px;width:7.7px;height:54px;background:linear-gradient(90deg,#e2e2e2,#f4f4f4 50%,#e2e2e2)"></div>
<div class="a" style="left:1402.6px;top:194.5px;width:7px;height:26.5px;border-radius:3.5px;background:#6f6f6f"></div>
<div class="a" style="left:1402.3px;top:248.2px;width:0.8px;height:8px;background:#dcdcdc"></div>
<svg class="a" style="left:1402px;top:248px" width="8" height="8" viewBox="0 0 8 8"><path d="M3.5 7 L7 3.5 M5.5 7 L7 5.5" stroke="#888" stroke-width="0.8"/></svg>
<div class="a" style="left:1086.3px;top:261px;width:324px;height:105.5px;background:#f7f7f7;border-top:1px solid #e2e2e2;border-left:3px solid #d7d7d7"></div>
<div class="a" style="left:1107px;top:280px;width:2px;height:71px;background:#d6d6d6"></div>
<div class="a" style="left:1107px;top:314px;width:19px;height:2px;background:#d6d6d6"></div>
<div class="a" style="left:1107px;top:349px;width:19px;height:2px;background:#d6d6d6"></div>
<div class="a" style="left:1103.7px;top:274.7px;width:10px;height:10px;border-radius:50%;background:#ee4fa0"></div>
<div class="a" style="left:1121.0px;top:310.0px;width:10px;height:10px;border-radius:50%;background:#ee4fa0"></div>
<div class="a" style="left:1121.0px;top:345.0px;width:10px;height:10px;border-radius:50%;background:#ee4fa0"></div>
<div class="t " style="left:1127.20px;top:274.31px;font-size:11.8px;line-height:11.8px;color:#5a5a5a">Fallback Language</div>
<div class="a" style="left:1370px;top:271px;width:25px;height:17.5px;border-radius:9px;background:#ee5b3f"></div>
<div class="t " style="left:1378.50px;top:274.47px;font-size:11.5px;line-height:11.5px;color:#fff;font-weight:bold">2</div>
<div class="t " style="left:1144.00px;top:309.89px;font-size:11px;line-height:11px;color:#4f4f4f;font-weight:bold;letter-spacing:0.1px;text-decoration:underline;text-underline-offset:1.5px">Borrowing shall be requested in dollars<span style="display:inline-block;transform:scaleX(0.72);transform-origin:0 0">…</span></div>
<div class="t " style="left:1144.00px;top:344.47px;font-size:11.5px;line-height:11.5px;color:#5c5c5c;letter-spacing:0.15px">Borrowing shall be requested in dollars, <span style="display:inline-block;transform:scaleX(0.72);transform-origin:0 0">…</span></div>
<svg class="a" style="left:1371px;top:308.5px" width="16" height="15" viewBox="0 0 16 15"><path d="M1.8 8 L6.2 12.3 L14.4 3.6" fill="none" stroke="#505050" stroke-width="2.1"/></svg>
<svg class="a" style="left:1371px;top:343.5px" width="16" height="15" viewBox="0 0 16 15"><path d="M1.8 8 L6.2 12.3 L14.4 3.6" fill="none" stroke="#505050" stroke-width="2.1"/></svg>
<div class="a" style="left:1071.7px;top:383.0px;width:10px;height:10px;border-radius:50%;background:#58c096"></div>
<div class="t " style="left:1086.00px;top:383.27px;font-size:10.9px;line-height:10.9px;color:#222;font-weight:bold;letter-spacing:-0.001px">Contract Value (USD)</div>
<svg class="a" style="left:1358px;top:384px" width="24" height="14" viewBox="0 0 24 14"><g fill="none" stroke="#b8bcc3" stroke-width="1.9"><rect x="2.6" y="2.0" width="11.2" height="7.2" rx="3.6"/><rect x="9.4" y="4.4" width="11.4" height="7.2" rx="3.6"/></g></svg>
<div class="t " style="left:1086.00px;top:406.22px;font-size:12.5px;line-height:12.5px;color:#1e1e1e;letter-spacing:0.427px">16500000</div>
<div class="a" style="left:1086px;top:423.9px;width:324px;height:1px;background:#d9d9d9"></div>
<div class="a" style="left:1071.7px;top:441.2px;width:10px;height:10px;border-radius:50%;background:#58c096"></div>
<div class="t " style="left:1086.00px;top:441.27px;font-size:10.9px;line-height:10.9px;color:#222;font-weight:bold;letter-spacing:-0.140px">Has LIBOR Fallback</div>
<svg class="a" style="left:1358px;top:442px" width="24" height="14" viewBox="0 0 24 14"><g fill="none" stroke="#b8bcc3" stroke-width="1.9"><rect x="2.6" y="2.0" width="11.2" height="7.2" rx="3.6"/><rect x="9.4" y="4.4" width="11.4" height="7.2" rx="3.6"/></g></svg>
<div class="t " style="left:1086.00px;top:463.02px;font-size:12.5px;line-height:12.5px;color:#1e1e1e;letter-spacing:0.154px">Yes</div>
<div class="a" style="left:1086px;top:482.7px;width:324px;height:1px;background:#d9d9d9"></div>
<div class="a" style="left:1071.7px;top:500.3px;width:10px;height:10px;border-radius:50%;background:#58c096"></div>
<div class="t " style="left:1086.00px;top:500.17px;font-size:10.9px;line-height:10.9px;color:#222;font-weight:bold;letter-spacing:-0.005px">Reason for re-papering</div>
<div class="t " style="left:1086.00px;top:522.42px;font-size:12.5px;line-height:12.5px;color:#1e1e1e;letter-spacing:0.411px">The Loans comprising each Eurocurrency Borrowing</div>
<div class="t " style="left:1086.00px;top:542.42px;font-size:12.5px;line-height:12.5px;color:#1e1e1e;letter-spacing:0.439px">shall bear interest at the Adjusted LIBO Rate for the</div>
<div class="t " style="left:1086.00px;top:562.42px;font-size:12.5px;line-height:12.5px;color:#1e1e1e;letter-spacing:0.522px">Interest Period in effect for such Borrowing plus the</div>
<div class="a" style="left:1402.5px;top:517.5px;width:7.5px;height:54.7px;background:linear-gradient(90deg,#e2e2e2,#f4f4f4 50%,#e2e2e2)"></div>
<div class="a" style="left:1402.8px;top:518px;width:7px;height:40.5px;border-radius:3.5px;background:#6f6f6f"></div>
<div class="a" style="left:1402.3px;top:572.2px;width:0.8px;height:8px;background:#dcdcdc"></div>
<svg class="a" style="left:1402px;top:572px" width="8" height="8" viewBox="0 0 8 8"><path d="M3.5 7 L7 3.5 M5.5 7 L7 5.5" stroke="#888" stroke-width="0.8"/></svg>
<div class="a" style="left:1086px;top:584.8px;width:324px;height:1px;background:#d9d9d9"></div>
<div class="t " style="left:1086.00px;top:602.07px;font-size:10.9px;line-height:10.9px;color:#222;font-weight:bold;letter-spacing:-0.116px">LIBOR Replacement Rate</div>
<div class="t " style="left:1310.80px;top:602.87px;font-size:10.9px;line-height:10.9px;color:#ee5b3f;font-weight:bold;letter-spacing:0.15px">Manage</div>
<div class="t " style="left:1086.00px;top:624.12px;font-size:12.5px;line-height:12.5px;color:#1e1e1e;letter-spacing:-0.974px">SOFR</div>
<div class="a" style="left:1086px;top:643.7px;width:324px;height:1px;background:#d9d9d9"></div>
<div class="a" style="left:1071.7px;top:660.8px;width:10px;height:10px;border-radius:50%;background:#58c096"></div>
<div class="t " style="left:1086.00px;top:660.77px;font-size:10.9px;line-height:10.9px;color:#222;font-weight:bold;letter-spacing:0.088px">Maturity Date</div>
<svg class="a" style="left:1358px;top:661px" width="24" height="14" viewBox="0 0 24 14"><g fill="none" stroke="#b8bcc3" stroke-width="1.9"><rect x="2.6" y="2.0" width="11.2" height="7.2" rx="3.6"/><rect x="9.4" y="4.4" width="11.4" height="7.2" rx="3.6"/></g></svg>
<div class="t " style="left:1086.00px;top:683.02px;font-size:12.5px;line-height:12.5px;color:#1e1e1e;letter-spacing:0.369px">August 22, 2022</div>
<div class="a" style="left:1086px;top:700.6px;width:324px;height:1px;background:#d9d9d9"></div>
<div class="a" style="left:1071.7px;top:718.3px;width:10px;height:10px;border-radius:50%;background:#58c096"></div>
<div class="t " style="left:1086.00px;top:718.27px;font-size:10.9px;line-height:10.9px;color:#222;font-weight:bold;letter-spacing:-0.093px">Type of Consent Required (Borrower or Le…</div>
<div class="t " style="left:1317.00px;top:718.27px;font-size:10.9px;line-height:10.9px;color:#ee5b3f;font-weight:bold;letter-spacing:0.15px">Manage</div>
<div class="t " style="left:1086.00px;top:760.22px;font-size:12.5px;line-height:12.5px;color:#1e1e1e;letter-spacing:0.303px">Lender Consent Required</div>
<div class="a" style="left:1086px;top:779.8px;width:324px;height:1px;background:#d9d9d9"></div>
<div class="a" style="left:1071.7px;top:797.0px;width:10px;height:10px;border-radius:50%;background:#58c096"></div>
<div class="t " style="left:1086.00px;top:797.07px;font-size:10.9px;line-height:10.9px;color:#222;font-weight:bold;letter-spacing:0.048px">Re-Papering Classification</div>
<div class="t " style="left:1310.80px;top:797.87px;font-size:10.9px;line-height:10.9px;color:#ee5b3f;font-weight:bold;letter-spacing:0.15px">Manage</div>
<div class="t " style="left:1086.00px;top:819.12px;font-size:12.5px;line-height:12.5px;color:#1e1e1e;letter-spacing:0.395px">Execution and Clearing Agreement</div>
<div class="a" style="left:1086px;top:838.7px;width:324px;height:1px;background:#d9d9d9"></div>
<div class="a" style="left:1071.7px;top:855.8px;width:10px;height:10px;border-radius:50%;background:#58c096"></div>
<div class="t " style="left:1086.00px;top:855.77px;font-size:10.9px;line-height:10.9px;color:#222;font-weight:bold;letter-spacing:-0.211px">Governing Law</div>
<svg class="a" style="left:1358px;top:856px" width="24" height="14" viewBox="0 0 24 14"><g fill="none" stroke="#b8bcc3" stroke-width="1.9"><rect x="2.6" y="2.0" width="11.2" height="7.2" rx="3.6"/><rect x="9.4" y="4.4" width="11.4" height="7.2" rx="3.6"/></g></svg>
<div class="a" style="left:1086px;top:870px;width:324px;height:22px;overflow:hidden">
<div class="t " style="left:0.00px;top:8.82px;font-size:12.5px;line-height:12.5px;color:#1e1e1e;letter-spacing:0.42px">governed by and construed in accordance with the internal laws</div>
</div></body></html>
